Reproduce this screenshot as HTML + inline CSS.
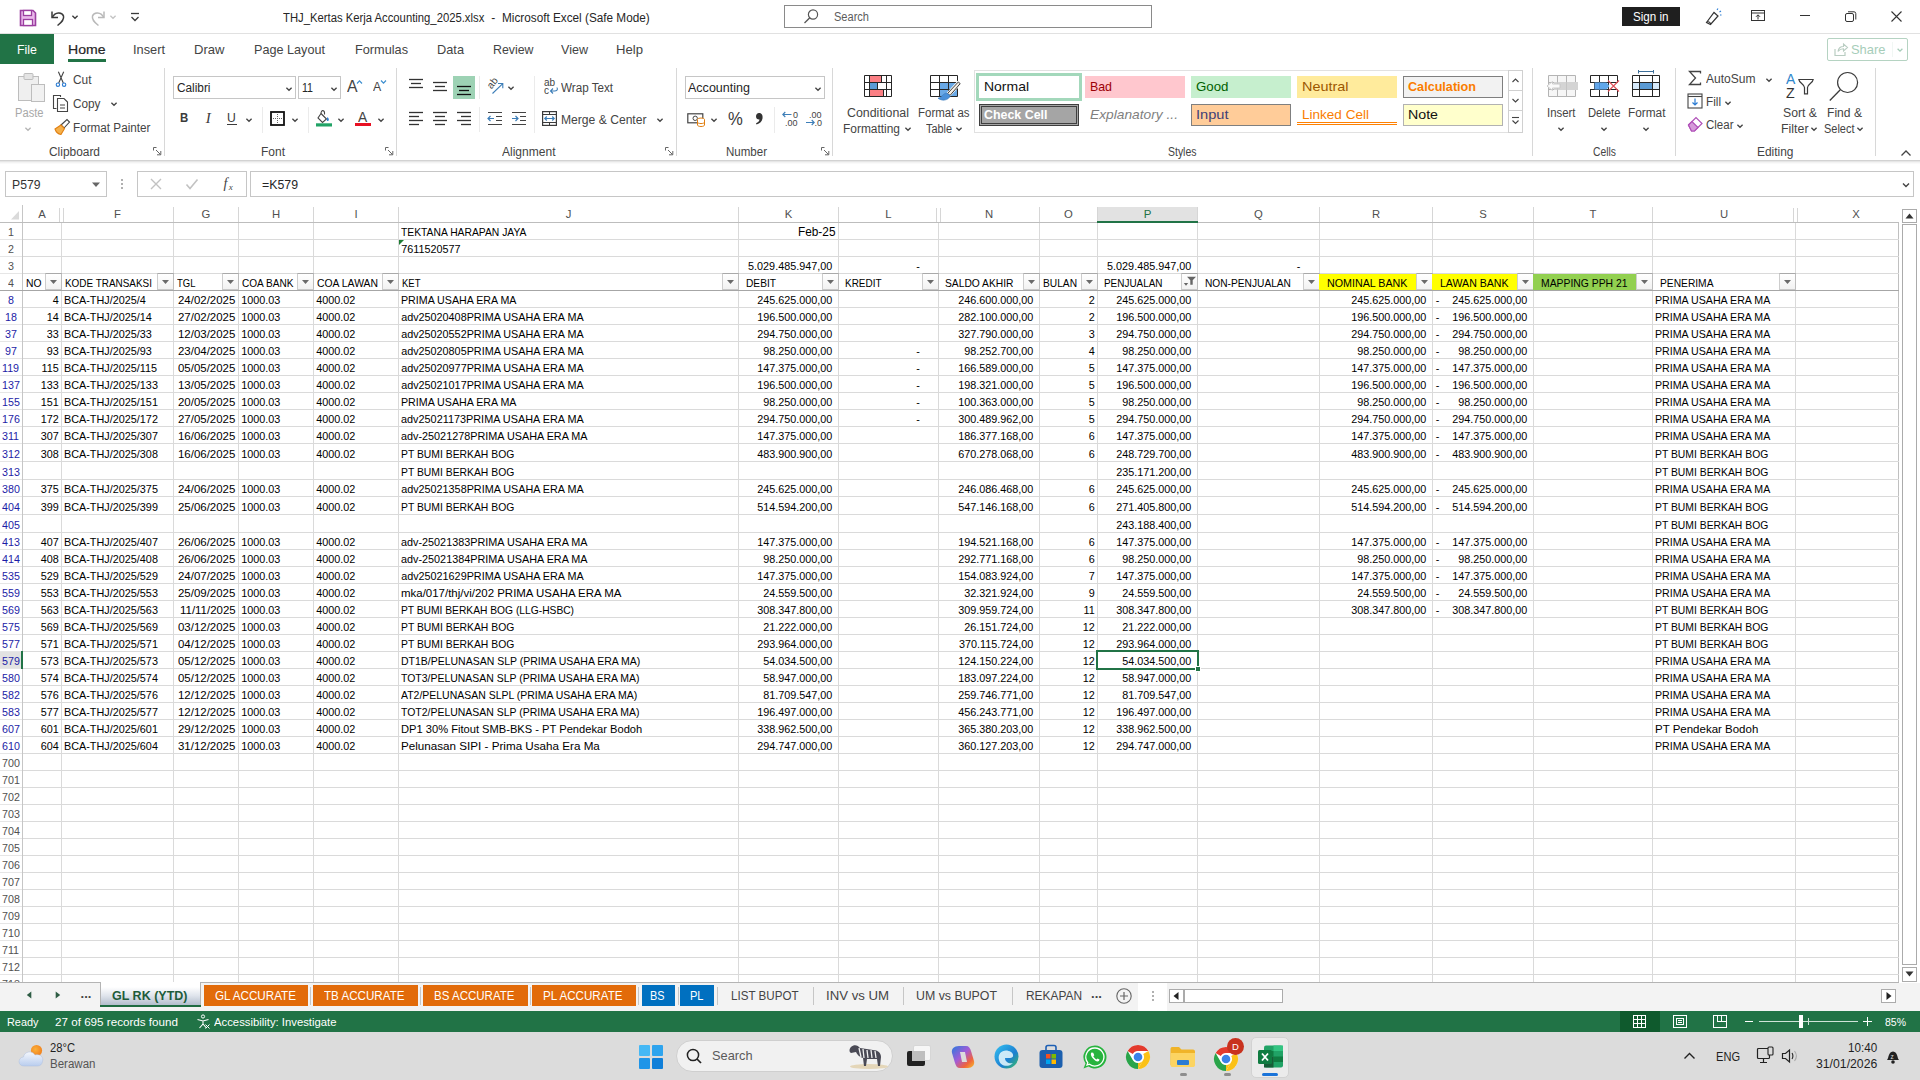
<!DOCTYPE html>
<html><head><meta charset="utf-8"><title>Excel</title>
<style>
html,body{margin:0;padding:0;background:#fff;}
body{width:1920px;height:1080px;position:relative;overflow:hidden;font-family:"Liberation Sans",sans-serif;}
.b{position:absolute;box-sizing:border-box;}
.t{position:absolute;white-space:pre;line-height:20px;height:20px;transform-origin:0 50%;}
</style></head><body>
<div class="b" style="left:22px;top:205px;width:1px;height:777px;background:#c6c6c6;"></div>
<div class="b" style="left:61px;top:223px;width:1px;height:759px;background:#dadada;"></div>
<div class="b" style="left:61px;top:207px;width:1px;height:16px;background:#d6d6d6;"></div>
<div class="b" style="left:173px;top:223px;width:1px;height:759px;background:#dadada;"></div>
<div class="b" style="left:173px;top:207px;width:1px;height:16px;background:#d6d6d6;"></div>
<div class="b" style="left:238px;top:223px;width:1px;height:759px;background:#dadada;"></div>
<div class="b" style="left:238px;top:207px;width:1px;height:16px;background:#d6d6d6;"></div>
<div class="b" style="left:313px;top:223px;width:1px;height:759px;background:#dadada;"></div>
<div class="b" style="left:313px;top:207px;width:1px;height:16px;background:#d6d6d6;"></div>
<div class="b" style="left:398px;top:223px;width:1px;height:759px;background:#dadada;"></div>
<div class="b" style="left:398px;top:207px;width:1px;height:16px;background:#d6d6d6;"></div>
<div class="b" style="left:738px;top:223px;width:1px;height:759px;background:#dadada;"></div>
<div class="b" style="left:738px;top:207px;width:1px;height:16px;background:#d6d6d6;"></div>
<div class="b" style="left:838px;top:223px;width:1px;height:759px;background:#dadada;"></div>
<div class="b" style="left:838px;top:207px;width:1px;height:16px;background:#d6d6d6;"></div>
<div class="b" style="left:938px;top:223px;width:1px;height:759px;background:#dadada;"></div>
<div class="b" style="left:938px;top:207px;width:1px;height:16px;background:#d6d6d6;"></div>
<div class="b" style="left:1039px;top:223px;width:1px;height:759px;background:#dadada;"></div>
<div class="b" style="left:1039px;top:207px;width:1px;height:16px;background:#d6d6d6;"></div>
<div class="b" style="left:1097px;top:223px;width:1px;height:759px;background:#dadada;"></div>
<div class="b" style="left:1097px;top:207px;width:1px;height:16px;background:#d6d6d6;"></div>
<div class="b" style="left:1197px;top:223px;width:1px;height:759px;background:#dadada;"></div>
<div class="b" style="left:1197px;top:207px;width:1px;height:16px;background:#d6d6d6;"></div>
<div class="b" style="left:1319px;top:223px;width:1px;height:759px;background:#dadada;"></div>
<div class="b" style="left:1319px;top:207px;width:1px;height:16px;background:#d6d6d6;"></div>
<div class="b" style="left:1432px;top:223px;width:1px;height:759px;background:#dadada;"></div>
<div class="b" style="left:1432px;top:207px;width:1px;height:16px;background:#d6d6d6;"></div>
<div class="b" style="left:1533px;top:223px;width:1px;height:759px;background:#dadada;"></div>
<div class="b" style="left:1533px;top:207px;width:1px;height:16px;background:#d6d6d6;"></div>
<div class="b" style="left:1652px;top:223px;width:1px;height:759px;background:#dadada;"></div>
<div class="b" style="left:1652px;top:207px;width:1px;height:16px;background:#d6d6d6;"></div>
<div class="b" style="left:1795px;top:223px;width:1px;height:759px;background:#dadada;"></div>
<div class="b" style="left:1795px;top:207px;width:1px;height:16px;background:#d6d6d6;"></div>
<div class="b" style="left:1898px;top:223px;width:1px;height:759px;background:#c0c0c0;"></div>
<div class="b" style="left:59px;top:208px;width:1px;height:15px;background:#d6d6d6;"></div>
<div class="b" style="left:61px;top:207px;width:1px;height:16px;background:#fff;"></div>
<div class="b" style="left:63px;top:208px;width:1px;height:15px;background:#d6d6d6;"></div>
<div class="b" style="left:936px;top:208px;width:1px;height:15px;background:#d6d6d6;"></div>
<div class="b" style="left:938px;top:207px;width:1px;height:16px;background:#fff;"></div>
<div class="b" style="left:940px;top:208px;width:1px;height:15px;background:#d6d6d6;"></div>
<div class="b" style="left:1793px;top:208px;width:1px;height:15px;background:#d6d6d6;"></div>
<div class="b" style="left:1795px;top:207px;width:1px;height:16px;background:#fff;"></div>
<div class="b" style="left:1797px;top:208px;width:1px;height:15px;background:#d6d6d6;"></div>
<div class="b" style="left:0px;top:222px;width:1899px;height:1px;background:#bdbdbd;"></div>
<div class="b" style="left:23px;top:239px;width:1876px;height:1px;background:#dadada;"></div>
<div class="b" style="left:0px;top:239px;width:22px;height:1px;background:#e6e6e6;"></div>
<div class="b" style="left:23px;top:256px;width:1876px;height:1px;background:#dadada;"></div>
<div class="b" style="left:0px;top:256px;width:22px;height:1px;background:#e6e6e6;"></div>
<div class="b" style="left:23px;top:273px;width:1876px;height:1px;background:#dadada;"></div>
<div class="b" style="left:0px;top:273px;width:22px;height:1px;background:#e6e6e6;"></div>
<div class="b" style="left:0px;top:290px;width:1899px;height:1px;background:#a6a6a6;"></div>
<div class="b" style="left:23px;top:307px;width:1876px;height:1px;background:#dadada;"></div>
<div class="b" style="left:0px;top:307px;width:22px;height:1px;background:#e6e6e6;"></div>
<div class="b" style="left:23px;top:324px;width:1876px;height:1px;background:#dadada;"></div>
<div class="b" style="left:0px;top:324px;width:22px;height:1px;background:#e6e6e6;"></div>
<div class="b" style="left:23px;top:341px;width:1876px;height:1px;background:#dadada;"></div>
<div class="b" style="left:0px;top:341px;width:22px;height:1px;background:#e6e6e6;"></div>
<div class="b" style="left:23px;top:358px;width:1876px;height:1px;background:#dadada;"></div>
<div class="b" style="left:0px;top:358px;width:22px;height:1px;background:#e6e6e6;"></div>
<div class="b" style="left:23px;top:375px;width:1876px;height:1px;background:#dadada;"></div>
<div class="b" style="left:0px;top:375px;width:22px;height:1px;background:#e6e6e6;"></div>
<div class="b" style="left:23px;top:392px;width:1876px;height:1px;background:#dadada;"></div>
<div class="b" style="left:0px;top:392px;width:22px;height:1px;background:#e6e6e6;"></div>
<div class="b" style="left:23px;top:409px;width:1876px;height:1px;background:#dadada;"></div>
<div class="b" style="left:0px;top:409px;width:22px;height:1px;background:#e6e6e6;"></div>
<div class="b" style="left:23px;top:426px;width:1876px;height:1px;background:#dadada;"></div>
<div class="b" style="left:0px;top:426px;width:22px;height:1px;background:#e6e6e6;"></div>
<div class="b" style="left:23px;top:443px;width:1876px;height:1px;background:#dadada;"></div>
<div class="b" style="left:0px;top:443px;width:22px;height:1px;background:#e6e6e6;"></div>
<div class="b" style="left:23px;top:461px;width:1876px;height:1px;background:#dadada;"></div>
<div class="b" style="left:0px;top:461px;width:22px;height:1px;background:#e6e6e6;"></div>
<div class="b" style="left:23px;top:479px;width:1876px;height:1px;background:#dadada;"></div>
<div class="b" style="left:0px;top:479px;width:22px;height:1px;background:#e6e6e6;"></div>
<div class="b" style="left:23px;top:496px;width:1876px;height:1px;background:#dadada;"></div>
<div class="b" style="left:0px;top:496px;width:22px;height:1px;background:#e6e6e6;"></div>
<div class="b" style="left:23px;top:514px;width:1876px;height:1px;background:#dadada;"></div>
<div class="b" style="left:0px;top:514px;width:22px;height:1px;background:#e6e6e6;"></div>
<div class="b" style="left:23px;top:532px;width:1876px;height:1px;background:#dadada;"></div>
<div class="b" style="left:0px;top:532px;width:22px;height:1px;background:#e6e6e6;"></div>
<div class="b" style="left:23px;top:549px;width:1876px;height:1px;background:#dadada;"></div>
<div class="b" style="left:0px;top:549px;width:22px;height:1px;background:#e6e6e6;"></div>
<div class="b" style="left:23px;top:566px;width:1876px;height:1px;background:#dadada;"></div>
<div class="b" style="left:0px;top:566px;width:22px;height:1px;background:#e6e6e6;"></div>
<div class="b" style="left:23px;top:583px;width:1876px;height:1px;background:#dadada;"></div>
<div class="b" style="left:0px;top:583px;width:22px;height:1px;background:#e6e6e6;"></div>
<div class="b" style="left:23px;top:600px;width:1876px;height:1px;background:#dadada;"></div>
<div class="b" style="left:0px;top:600px;width:22px;height:1px;background:#e6e6e6;"></div>
<div class="b" style="left:23px;top:617px;width:1876px;height:1px;background:#dadada;"></div>
<div class="b" style="left:0px;top:617px;width:22px;height:1px;background:#e6e6e6;"></div>
<div class="b" style="left:23px;top:634px;width:1876px;height:1px;background:#dadada;"></div>
<div class="b" style="left:0px;top:634px;width:22px;height:1px;background:#e6e6e6;"></div>
<div class="b" style="left:23px;top:651px;width:1876px;height:1px;background:#dadada;"></div>
<div class="b" style="left:0px;top:651px;width:22px;height:1px;background:#e6e6e6;"></div>
<div class="b" style="left:23px;top:668px;width:1876px;height:1px;background:#dadada;"></div>
<div class="b" style="left:0px;top:668px;width:22px;height:1px;background:#e6e6e6;"></div>
<div class="b" style="left:23px;top:685px;width:1876px;height:1px;background:#dadada;"></div>
<div class="b" style="left:0px;top:685px;width:22px;height:1px;background:#e6e6e6;"></div>
<div class="b" style="left:23px;top:702px;width:1876px;height:1px;background:#dadada;"></div>
<div class="b" style="left:0px;top:702px;width:22px;height:1px;background:#e6e6e6;"></div>
<div class="b" style="left:23px;top:719px;width:1876px;height:1px;background:#dadada;"></div>
<div class="b" style="left:0px;top:719px;width:22px;height:1px;background:#e6e6e6;"></div>
<div class="b" style="left:23px;top:736px;width:1876px;height:1px;background:#dadada;"></div>
<div class="b" style="left:0px;top:736px;width:22px;height:1px;background:#e6e6e6;"></div>
<div class="b" style="left:23px;top:753px;width:1876px;height:1px;background:#dadada;"></div>
<div class="b" style="left:0px;top:753px;width:22px;height:1px;background:#e6e6e6;"></div>
<div class="b" style="left:23px;top:770px;width:1876px;height:1px;background:#dadada;"></div>
<div class="b" style="left:0px;top:770px;width:22px;height:1px;background:#e6e6e6;"></div>
<div class="b" style="left:23px;top:787px;width:1876px;height:1px;background:#dadada;"></div>
<div class="b" style="left:0px;top:787px;width:22px;height:1px;background:#e6e6e6;"></div>
<div class="b" style="left:23px;top:804px;width:1876px;height:1px;background:#dadada;"></div>
<div class="b" style="left:0px;top:804px;width:22px;height:1px;background:#e6e6e6;"></div>
<div class="b" style="left:23px;top:821px;width:1876px;height:1px;background:#dadada;"></div>
<div class="b" style="left:0px;top:821px;width:22px;height:1px;background:#e6e6e6;"></div>
<div class="b" style="left:23px;top:838px;width:1876px;height:1px;background:#dadada;"></div>
<div class="b" style="left:0px;top:838px;width:22px;height:1px;background:#e6e6e6;"></div>
<div class="b" style="left:23px;top:855px;width:1876px;height:1px;background:#dadada;"></div>
<div class="b" style="left:0px;top:855px;width:22px;height:1px;background:#e6e6e6;"></div>
<div class="b" style="left:23px;top:872px;width:1876px;height:1px;background:#dadada;"></div>
<div class="b" style="left:0px;top:872px;width:22px;height:1px;background:#e6e6e6;"></div>
<div class="b" style="left:23px;top:889px;width:1876px;height:1px;background:#dadada;"></div>
<div class="b" style="left:0px;top:889px;width:22px;height:1px;background:#e6e6e6;"></div>
<div class="b" style="left:23px;top:906px;width:1876px;height:1px;background:#dadada;"></div>
<div class="b" style="left:0px;top:906px;width:22px;height:1px;background:#e6e6e6;"></div>
<div class="b" style="left:23px;top:923px;width:1876px;height:1px;background:#dadada;"></div>
<div class="b" style="left:0px;top:923px;width:22px;height:1px;background:#e6e6e6;"></div>
<div class="b" style="left:23px;top:940px;width:1876px;height:1px;background:#dadada;"></div>
<div class="b" style="left:0px;top:940px;width:22px;height:1px;background:#e6e6e6;"></div>
<div class="b" style="left:23px;top:957px;width:1876px;height:1px;background:#dadada;"></div>
<div class="b" style="left:0px;top:957px;width:22px;height:1px;background:#e6e6e6;"></div>
<div class="b" style="left:23px;top:974px;width:1876px;height:1px;background:#dadada;"></div>
<div class="b" style="left:0px;top:974px;width:22px;height:1px;background:#e6e6e6;"></div>
<svg class="b" style="left:4px;top:207px;" width="16" height="14" viewBox="0 0 16 14"><path d="M15 4 L15 12.5 L7 12.5 Z" fill="#dadada"/></svg>
<div class="b" style="left:1098px;top:207px;width:99px;height:14px;background:#e2e2e2;"></div>
<div class="b" style="left:1097px;top:221px;width:101px;height:2px;background:#217346;"></div>
<span class="t" style="left:38.23px;top:204.00px;font-size:11.3px;color:#505050;">A</span>
<span class="t" style="left:114.05px;top:204.00px;font-size:11.3px;color:#505050;">F</span>
<span class="t" style="left:201.61px;top:204.00px;font-size:11.3px;color:#505050;">G</span>
<span class="t" style="left:271.92px;top:204.00px;font-size:11.3px;color:#505050;">H</span>
<span class="t" style="left:354.43px;top:204.00px;font-size:11.3px;color:#505050;">I</span>
<span class="t" style="left:565.67px;top:204.00px;font-size:11.3px;color:#505050;">J</span>
<span class="t" style="left:784.73px;top:204.00px;font-size:11.3px;color:#505050;">K</span>
<span class="t" style="left:885.36px;top:204.00px;font-size:11.3px;color:#505050;">L</span>
<span class="t" style="left:984.92px;top:204.00px;font-size:11.3px;color:#505050;">N</span>
<span class="t" style="left:1064.11px;top:204.00px;font-size:11.3px;color:#505050;">O</span>
<span class="t" style="left:1143.66px;top:204.00px;font-size:11.5px;color:#217346;">P</span>
<span class="t" style="left:1254.11px;top:204.00px;font-size:11.3px;color:#505050;">Q</span>
<span class="t" style="left:1371.92px;top:204.00px;font-size:11.3px;color:#505050;">R</span>
<span class="t" style="left:1479.23px;top:204.00px;font-size:11.3px;color:#505050;">S</span>
<span class="t" style="left:1589.55px;top:204.00px;font-size:11.3px;color:#505050;">T</span>
<span class="t" style="left:1719.92px;top:204.00px;font-size:11.3px;color:#505050;">U</span>
<span class="t" style="left:1852.23px;top:204.00px;font-size:11.3px;color:#505050;">X</span>
<span class="t" style="left:7.93px;top:221.90px;font-size:11.5px;color:#505050;transform:scaleX(0.9300);">1</span>
<span class="t" style="left:7.93px;top:238.90px;font-size:11.5px;color:#505050;transform:scaleX(0.9300);">2</span>
<span class="t" style="left:7.93px;top:255.90px;font-size:11.5px;color:#505050;transform:scaleX(0.9300);">3</span>
<span class="t" style="left:7.93px;top:272.90px;font-size:11.5px;color:#505050;transform:scaleX(0.9300);">4</span>
<span class="t" style="left:7.93px;top:289.90px;font-size:11.5px;color:#1c1ca6;transform:scaleX(0.9300);">8</span>
<span class="t" style="left:4.95px;top:306.90px;font-size:11.5px;color:#1c1ca6;transform:scaleX(0.9300);">18</span>
<span class="t" style="left:4.95px;top:323.90px;font-size:11.5px;color:#1c1ca6;transform:scaleX(0.9300);">37</span>
<span class="t" style="left:4.95px;top:340.90px;font-size:11.5px;color:#1c1ca6;transform:scaleX(0.9300);">97</span>
<span class="t" style="left:2.37px;top:357.90px;font-size:11.5px;color:#1c1ca6;transform:scaleX(0.9300);">119</span>
<span class="t" style="left:1.98px;top:374.90px;font-size:11.5px;color:#1c1ca6;transform:scaleX(0.9300);">137</span>
<span class="t" style="left:1.98px;top:391.90px;font-size:11.5px;color:#1c1ca6;transform:scaleX(0.9300);">155</span>
<span class="t" style="left:1.98px;top:408.90px;font-size:11.5px;color:#1c1ca6;transform:scaleX(0.9300);">176</span>
<span class="t" style="left:2.37px;top:425.90px;font-size:11.5px;color:#1c1ca6;transform:scaleX(0.9300);">311</span>
<span class="t" style="left:1.98px;top:443.90px;font-size:11.5px;color:#1c1ca6;transform:scaleX(0.9300);">312</span>
<span class="t" style="left:1.98px;top:461.90px;font-size:11.5px;color:#1c1ca6;transform:scaleX(0.9300);">313</span>
<span class="t" style="left:1.98px;top:478.90px;font-size:11.5px;color:#1c1ca6;transform:scaleX(0.9300);">380</span>
<span class="t" style="left:1.98px;top:496.90px;font-size:11.5px;color:#1c1ca6;transform:scaleX(0.9300);">404</span>
<span class="t" style="left:1.98px;top:514.90px;font-size:11.5px;color:#1c1ca6;transform:scaleX(0.9300);">405</span>
<span class="t" style="left:1.98px;top:531.90px;font-size:11.5px;color:#1c1ca6;transform:scaleX(0.9300);">413</span>
<span class="t" style="left:1.98px;top:548.90px;font-size:11.5px;color:#1c1ca6;transform:scaleX(0.9300);">414</span>
<span class="t" style="left:1.98px;top:565.90px;font-size:11.5px;color:#1c1ca6;transform:scaleX(0.9300);">535</span>
<span class="t" style="left:1.98px;top:582.90px;font-size:11.5px;color:#1c1ca6;transform:scaleX(0.9300);">559</span>
<span class="t" style="left:1.98px;top:599.90px;font-size:11.5px;color:#1c1ca6;transform:scaleX(0.9300);">569</span>
<span class="t" style="left:1.98px;top:616.90px;font-size:11.5px;color:#1c1ca6;transform:scaleX(0.9300);">575</span>
<span class="t" style="left:1.98px;top:633.90px;font-size:11.5px;color:#1c1ca6;transform:scaleX(0.9300);">577</span>
<div class="b" style="left:0px;top:652px;width:21px;height:16px;background:#e2e2e2;"></div>
<div class="b" style="left:21px;top:651px;width:2px;height:18px;background:#217346;"></div>
<span class="t" style="left:1.98px;top:650.90px;font-size:11.5px;color:#1c1ca6;transform:scaleX(0.9300);">579</span>
<span class="t" style="left:1.98px;top:667.90px;font-size:11.5px;color:#1c1ca6;transform:scaleX(0.9300);">580</span>
<span class="t" style="left:1.98px;top:684.90px;font-size:11.5px;color:#1c1ca6;transform:scaleX(0.9300);">582</span>
<span class="t" style="left:1.98px;top:701.90px;font-size:11.5px;color:#1c1ca6;transform:scaleX(0.9300);">583</span>
<span class="t" style="left:1.98px;top:718.90px;font-size:11.5px;color:#1c1ca6;transform:scaleX(0.9300);">607</span>
<span class="t" style="left:1.98px;top:735.90px;font-size:11.5px;color:#1c1ca6;transform:scaleX(0.9300);">610</span>
<span class="t" style="left:1.98px;top:752.90px;font-size:11.5px;color:#505050;transform:scaleX(0.9300);">700</span>
<span class="t" style="left:1.98px;top:769.90px;font-size:11.5px;color:#505050;transform:scaleX(0.9300);">701</span>
<span class="t" style="left:1.98px;top:786.90px;font-size:11.5px;color:#505050;transform:scaleX(0.9300);">702</span>
<span class="t" style="left:1.98px;top:803.90px;font-size:11.5px;color:#505050;transform:scaleX(0.9300);">703</span>
<span class="t" style="left:1.98px;top:820.90px;font-size:11.5px;color:#505050;transform:scaleX(0.9300);">704</span>
<span class="t" style="left:1.98px;top:837.90px;font-size:11.5px;color:#505050;transform:scaleX(0.9300);">705</span>
<span class="t" style="left:1.98px;top:854.90px;font-size:11.5px;color:#505050;transform:scaleX(0.9300);">706</span>
<span class="t" style="left:1.98px;top:871.90px;font-size:11.5px;color:#505050;transform:scaleX(0.9300);">707</span>
<span class="t" style="left:1.98px;top:888.90px;font-size:11.5px;color:#505050;transform:scaleX(0.9300);">708</span>
<span class="t" style="left:1.98px;top:905.90px;font-size:11.5px;color:#505050;transform:scaleX(0.9300);">709</span>
<span class="t" style="left:1.98px;top:922.90px;font-size:11.5px;color:#505050;transform:scaleX(0.9300);">710</span>
<span class="t" style="left:2.37px;top:939.90px;font-size:11.5px;color:#505050;transform:scaleX(0.9300);">711</span>
<span class="t" style="left:1.98px;top:956.90px;font-size:11.5px;color:#505050;transform:scaleX(0.9300);">712</span>
<div class="b" style="left:0;top:975px;width:22px;height:7px;overflow:hidden"><span class="t" style="left:2.2px;top:-1.5px;font-size:11.5px;color:#505050;transform:scaleX(.93)">713</span></div>
<span class="t" style="left:401.20px;top:221.60px;font-size:10.8px;color:#000;transform:scaleX(0.9563);">TEKTANA HARAPAN JAYA</span>
<span class="t" style="left:401.20px;top:238.60px;font-size:10.8px;color:#000;">7611520577</span>
<svg class="b" style="left:399px;top:240px;" width="6" height="6" viewBox="0 0 6 6"><path d="M0 0 H5 L0 5 Z" fill="#1e7b34"/></svg>
<span class="t" style="left:798.00px;top:221.60px;font-size:12.2px;color:#000;transform:scaleX(0.9700);">Feb-25</span>
<span class="t" style="left:748.12px;top:255.60px;font-size:10.8px;color:#000;">5.029.485.947,00</span>
<span class="t" style="left:1107.12px;top:255.60px;font-size:10.8px;color:#000;">5.029.485.947,00</span>
<span class="t" style="left:916.20px;top:255.60px;font-size:10.8px;color:#000;">-</span>
<span class="t" style="left:1296.70px;top:255.60px;font-size:10.8px;color:#000;">-</span>
<div class="b" style="left:1319px;top:274px;width:113px;height:16px;background:#ffff00;"></div>
<div class="b" style="left:1432px;top:274px;width:101px;height:16px;background:#ffff00;"></div>
<div class="b" style="left:1533px;top:274px;width:119px;height:16px;background:#92d050;"></div>
<span class="t" style="left:25.80px;top:272.60px;font-size:10.8px;color:#000;transform:scaleX(0.9568);">NO</span>
<span class="t" style="left:64.50px;top:272.60px;font-size:10.8px;color:#000;transform:scaleX(0.9194);">KODE TRANSAKSI</span>
<span class="t" style="left:176.50px;top:272.60px;font-size:10.8px;color:#000;transform:scaleX(0.8808);">TGL</span>
<span class="t" style="left:241.50px;top:272.60px;font-size:10.8px;color:#000;transform:scaleX(0.9326);">COA BANK</span>
<span class="t" style="left:316.50px;top:272.60px;font-size:10.8px;color:#000;transform:scaleX(0.9619);">COA LAWAN</span>
<span class="t" style="left:401.50px;top:272.60px;font-size:10.8px;color:#000;transform:scaleX(0.8807);">KET</span>
<span class="t" style="left:745.50px;top:272.60px;font-size:10.8px;color:#000;transform:scaleX(0.9432);">DEBIT</span>
<span class="t" style="left:845.00px;top:272.60px;font-size:10.8px;color:#000;transform:scaleX(0.9216);">KREDIT</span>
<span class="t" style="left:945.00px;top:272.60px;font-size:10.8px;color:#000;transform:scaleX(0.9510);">SALDO AKHIR</span>
<span class="t" style="left:1042.50px;top:272.60px;font-size:10.8px;color:#000;transform:scaleX(0.9441);">BULAN</span>
<span class="t" style="left:1104.00px;top:272.60px;font-size:10.8px;color:#000;transform:scaleX(0.9195);">PENJUALAN</span>
<span class="t" style="left:1204.50px;top:272.60px;font-size:10.8px;color:#000;transform:scaleX(0.9428);">NON-PENJUALAN</span>
<span class="t" style="left:1326.50px;top:272.60px;font-size:10.8px;color:#000;transform:scaleX(0.9912);">NOMINAL BANK</span>
<span class="t" style="left:1439.50px;top:272.60px;font-size:10.8px;color:#000;transform:scaleX(0.9783);">LAWAN BANK</span>
<span class="t" style="left:1540.50px;top:272.60px;font-size:10.8px;color:#000;transform:scaleX(0.9608);">MAPPING PPH 21</span>
<span class="t" style="left:1659.50px;top:272.60px;font-size:10.8px;color:#000;transform:scaleX(0.9484);">PENERIMA</span>
<div class="b" style="left:45px;top:273px;width:17px;height:17px;background:linear-gradient(#ffffff,#f2f2f2);border-left:1px solid #cdcdcd;border-top:1px solid #a9a9a9;border-right:1px solid #bdbdbd;border-bottom:1px solid #c9c9c9;"></div>
<svg class="b" style="left:45px;top:273px;" width="17" height="17" viewBox="0 0 17 17"><path d="M5 7 H12 L8.5 11 Z" fill="#6a6a6a"/></svg>
<div class="b" style="left:157px;top:273px;width:17px;height:17px;background:linear-gradient(#ffffff,#f2f2f2);border-left:1px solid #cdcdcd;border-top:1px solid #a9a9a9;border-right:1px solid #bdbdbd;border-bottom:1px solid #c9c9c9;"></div>
<svg class="b" style="left:157px;top:273px;" width="17" height="17" viewBox="0 0 17 17"><path d="M5 7 H12 L8.5 11 Z" fill="#6a6a6a"/></svg>
<div class="b" style="left:222px;top:273px;width:17px;height:17px;background:linear-gradient(#ffffff,#f2f2f2);border-left:1px solid #cdcdcd;border-top:1px solid #a9a9a9;border-right:1px solid #bdbdbd;border-bottom:1px solid #c9c9c9;"></div>
<svg class="b" style="left:222px;top:273px;" width="17" height="17" viewBox="0 0 17 17"><path d="M5 7 H12 L8.5 11 Z" fill="#6a6a6a"/></svg>
<div class="b" style="left:297px;top:273px;width:17px;height:17px;background:linear-gradient(#ffffff,#f2f2f2);border-left:1px solid #cdcdcd;border-top:1px solid #a9a9a9;border-right:1px solid #bdbdbd;border-bottom:1px solid #c9c9c9;"></div>
<svg class="b" style="left:297px;top:273px;" width="17" height="17" viewBox="0 0 17 17"><path d="M5 7 H12 L8.5 11 Z" fill="#6a6a6a"/></svg>
<div class="b" style="left:382px;top:273px;width:17px;height:17px;background:linear-gradient(#ffffff,#f2f2f2);border-left:1px solid #cdcdcd;border-top:1px solid #a9a9a9;border-right:1px solid #bdbdbd;border-bottom:1px solid #c9c9c9;"></div>
<svg class="b" style="left:382px;top:273px;" width="17" height="17" viewBox="0 0 17 17"><path d="M5 7 H12 L8.5 11 Z" fill="#6a6a6a"/></svg>
<div class="b" style="left:722px;top:273px;width:17px;height:17px;background:linear-gradient(#ffffff,#f2f2f2);border-left:1px solid #cdcdcd;border-top:1px solid #a9a9a9;border-right:1px solid #bdbdbd;border-bottom:1px solid #c9c9c9;"></div>
<svg class="b" style="left:722px;top:273px;" width="17" height="17" viewBox="0 0 17 17"><path d="M5 7 H12 L8.5 11 Z" fill="#6a6a6a"/></svg>
<div class="b" style="left:822px;top:273px;width:17px;height:17px;background:linear-gradient(#ffffff,#f2f2f2);border-left:1px solid #cdcdcd;border-top:1px solid #a9a9a9;border-right:1px solid #bdbdbd;border-bottom:1px solid #c9c9c9;"></div>
<svg class="b" style="left:822px;top:273px;" width="17" height="17" viewBox="0 0 17 17"><path d="M5 7 H12 L8.5 11 Z" fill="#6a6a6a"/></svg>
<div class="b" style="left:922px;top:273px;width:17px;height:17px;background:linear-gradient(#ffffff,#f2f2f2);border-left:1px solid #cdcdcd;border-top:1px solid #a9a9a9;border-right:1px solid #bdbdbd;border-bottom:1px solid #c9c9c9;"></div>
<svg class="b" style="left:922px;top:273px;" width="17" height="17" viewBox="0 0 17 17"><path d="M5 7 H12 L8.5 11 Z" fill="#6a6a6a"/></svg>
<div class="b" style="left:1023px;top:273px;width:17px;height:17px;background:linear-gradient(#ffffff,#f2f2f2);border-left:1px solid #cdcdcd;border-top:1px solid #a9a9a9;border-right:1px solid #bdbdbd;border-bottom:1px solid #c9c9c9;"></div>
<svg class="b" style="left:1023px;top:273px;" width="17" height="17" viewBox="0 0 17 17"><path d="M5 7 H12 L8.5 11 Z" fill="#6a6a6a"/></svg>
<div class="b" style="left:1081px;top:273px;width:17px;height:17px;background:linear-gradient(#ffffff,#f2f2f2);border-left:1px solid #cdcdcd;border-top:1px solid #a9a9a9;border-right:1px solid #bdbdbd;border-bottom:1px solid #c9c9c9;"></div>
<svg class="b" style="left:1081px;top:273px;" width="17" height="17" viewBox="0 0 17 17"><path d="M5 7 H12 L8.5 11 Z" fill="#6a6a6a"/></svg>
<div class="b" style="left:1303px;top:273px;width:17px;height:17px;background:linear-gradient(#ffffff,#f2f2f2);border-left:1px solid #cdcdcd;border-top:1px solid #a9a9a9;border-right:1px solid #bdbdbd;border-bottom:1px solid #c9c9c9;"></div>
<svg class="b" style="left:1303px;top:273px;" width="17" height="17" viewBox="0 0 17 17"><path d="M5 7 H12 L8.5 11 Z" fill="#6a6a6a"/></svg>
<div class="b" style="left:1416px;top:273px;width:17px;height:17px;background:linear-gradient(#ffffff,#f2f2f2);border-left:1px solid #cdcdcd;border-top:1px solid #a9a9a9;border-right:1px solid #bdbdbd;border-bottom:1px solid #c9c9c9;"></div>
<svg class="b" style="left:1416px;top:273px;" width="17" height="17" viewBox="0 0 17 17"><path d="M5 7 H12 L8.5 11 Z" fill="#6a6a6a"/></svg>
<div class="b" style="left:1517px;top:273px;width:17px;height:17px;background:linear-gradient(#ffffff,#f2f2f2);border-left:1px solid #cdcdcd;border-top:1px solid #a9a9a9;border-right:1px solid #bdbdbd;border-bottom:1px solid #c9c9c9;"></div>
<svg class="b" style="left:1517px;top:273px;" width="17" height="17" viewBox="0 0 17 17"><path d="M5 7 H12 L8.5 11 Z" fill="#6a6a6a"/></svg>
<div class="b" style="left:1636px;top:273px;width:17px;height:17px;background:linear-gradient(#ffffff,#f2f2f2);border-left:1px solid #cdcdcd;border-top:1px solid #a9a9a9;border-right:1px solid #bdbdbd;border-bottom:1px solid #c9c9c9;"></div>
<svg class="b" style="left:1636px;top:273px;" width="17" height="17" viewBox="0 0 17 17"><path d="M5 7 H12 L8.5 11 Z" fill="#6a6a6a"/></svg>
<div class="b" style="left:1779px;top:273px;width:17px;height:17px;background:linear-gradient(#ffffff,#f2f2f2);border-left:1px solid #cdcdcd;border-top:1px solid #a9a9a9;border-right:1px solid #bdbdbd;border-bottom:1px solid #c9c9c9;"></div>
<svg class="b" style="left:1779px;top:273px;" width="17" height="17" viewBox="0 0 17 17"><path d="M5 7 H12 L8.5 11 Z" fill="#6a6a6a"/></svg>
<div class="b" style="left:1181px;top:273px;width:17px;height:17px;background:linear-gradient(#ffffff,#f2f2f2);border-left:1px solid #cdcdcd;border-top:1px solid #a9a9a9;border-right:1px solid #bdbdbd;border-bottom:1px solid #c9c9c9;"></div>
<svg class="b" style="left:1181px;top:273px;" width="17" height="17" viewBox="0 0 17 17"><path d="M6 3.8 H15 L11.7 7.3 V11.8 H9.3 V7.3 Z" fill="#666"/><path d="M2.8 10 H7.2 L5 12.8 Z" fill="#666"/></svg>
<div class="b" style="left:1319px;top:274px;width:1px;height:16px;background:#ffff00;"></div>
<div class="b" style="left:1432px;top:274px;width:1px;height:16px;background:#ffff00;"></div>
<div class="b" style="left:1533px;top:274px;width:1px;height:16px;background:#92d050;"></div>
<span class="t" style="left:52.79px;top:289.60px;font-size:10.8px;color:#000;">4</span>
<span class="t" style="left:64.20px;top:289.60px;font-size:10.8px;color:#000;transform:scaleX(1.0030);">BCA-THJ/2025/4</span>
<span class="t" style="left:178.25px;top:289.60px;font-size:10.8px;color:#000;transform:scaleX(1.0610);">24/02/2025</span>
<span class="t" style="left:241.20px;top:289.60px;font-size:10.8px;color:#000;">1000.03</span>
<span class="t" style="left:316.20px;top:289.60px;font-size:10.8px;color:#000;">4000.02</span>
<span class="t" style="left:401.20px;top:289.60px;font-size:10.8px;color:#000;transform:scaleX(0.9869);">PRIMA USAHA ERA MA</span>
<span class="t" style="left:757.13px;top:289.60px;font-size:10.8px;color:#000;">245.625.000,00</span>
<span class="t" style="left:958.13px;top:289.60px;font-size:10.8px;color:#000;">246.600.000,00</span>
<span class="t" style="left:1088.79px;top:289.60px;font-size:10.8px;color:#000;">2</span>
<span class="t" style="left:1116.13px;top:289.60px;font-size:10.8px;color:#000;">245.625.000,00</span>
<span class="t" style="left:1351.13px;top:289.60px;font-size:10.8px;color:#000;">245.625.000,00</span>
<span class="t" style="left:1452.13px;top:289.60px;font-size:10.8px;color:#000;">245.625.000,00</span>
<span class="t" style="left:1435.70px;top:289.60px;font-size:10.8px;color:#000;">-</span>
<span class="t" style="left:1655.20px;top:289.60px;font-size:10.8px;color:#000;transform:scaleX(0.9851);">PRIMA USAHA ERA MA</span>
<span class="t" style="left:46.79px;top:306.60px;font-size:10.8px;color:#000;">14</span>
<span class="t" style="left:64.20px;top:306.60px;font-size:10.8px;color:#000;transform:scaleX(1.0030);">BCA-THJ/2025/14</span>
<span class="t" style="left:178.25px;top:306.60px;font-size:10.8px;color:#000;transform:scaleX(1.0610);">27/02/2025</span>
<span class="t" style="left:241.20px;top:306.60px;font-size:10.8px;color:#000;">1000.03</span>
<span class="t" style="left:316.20px;top:306.60px;font-size:10.8px;color:#000;">4000.02</span>
<span class="t" style="left:401.20px;top:306.60px;font-size:10.8px;color:#000;">adv25020408PRIMA USAHA ERA MA</span>
<span class="t" style="left:757.13px;top:306.60px;font-size:10.8px;color:#000;">196.500.000,00</span>
<span class="t" style="left:958.13px;top:306.60px;font-size:10.8px;color:#000;">282.100.000,00</span>
<span class="t" style="left:1088.79px;top:306.60px;font-size:10.8px;color:#000;">2</span>
<span class="t" style="left:1116.13px;top:306.60px;font-size:10.8px;color:#000;">196.500.000,00</span>
<span class="t" style="left:1351.13px;top:306.60px;font-size:10.8px;color:#000;">196.500.000,00</span>
<span class="t" style="left:1452.13px;top:306.60px;font-size:10.8px;color:#000;">196.500.000,00</span>
<span class="t" style="left:1435.70px;top:306.60px;font-size:10.8px;color:#000;">-</span>
<span class="t" style="left:1655.20px;top:306.60px;font-size:10.8px;color:#000;transform:scaleX(0.9851);">PRIMA USAHA ERA MA</span>
<span class="t" style="left:46.79px;top:323.60px;font-size:10.8px;color:#000;">33</span>
<span class="t" style="left:64.20px;top:323.60px;font-size:10.8px;color:#000;transform:scaleX(1.0030);">BCA-THJ/2025/33</span>
<span class="t" style="left:178.25px;top:323.60px;font-size:10.8px;color:#000;transform:scaleX(1.0610);">12/03/2025</span>
<span class="t" style="left:241.20px;top:323.60px;font-size:10.8px;color:#000;">1000.03</span>
<span class="t" style="left:316.20px;top:323.60px;font-size:10.8px;color:#000;">4000.02</span>
<span class="t" style="left:401.20px;top:323.60px;font-size:10.8px;color:#000;">adv25020552PRIMA USAHA ERA MA</span>
<span class="t" style="left:757.13px;top:323.60px;font-size:10.8px;color:#000;">294.750.000,00</span>
<span class="t" style="left:958.13px;top:323.60px;font-size:10.8px;color:#000;">327.790.000,00</span>
<span class="t" style="left:1088.79px;top:323.60px;font-size:10.8px;color:#000;">3</span>
<span class="t" style="left:1116.13px;top:323.60px;font-size:10.8px;color:#000;">294.750.000,00</span>
<span class="t" style="left:1351.13px;top:323.60px;font-size:10.8px;color:#000;">294.750.000,00</span>
<span class="t" style="left:1452.13px;top:323.60px;font-size:10.8px;color:#000;">294.750.000,00</span>
<span class="t" style="left:1435.70px;top:323.60px;font-size:10.8px;color:#000;">-</span>
<span class="t" style="left:1655.20px;top:323.60px;font-size:10.8px;color:#000;transform:scaleX(0.9851);">PRIMA USAHA ERA MA</span>
<span class="t" style="left:46.79px;top:340.60px;font-size:10.8px;color:#000;">93</span>
<span class="t" style="left:64.20px;top:340.60px;font-size:10.8px;color:#000;transform:scaleX(1.0030);">BCA-THJ/2025/93</span>
<span class="t" style="left:178.25px;top:340.60px;font-size:10.8px;color:#000;transform:scaleX(1.0610);">23/04/2025</span>
<span class="t" style="left:241.20px;top:340.60px;font-size:10.8px;color:#000;">1000.03</span>
<span class="t" style="left:316.20px;top:340.60px;font-size:10.8px;color:#000;">4000.02</span>
<span class="t" style="left:401.20px;top:340.60px;font-size:10.8px;color:#000;">adv25020805PRIMA USAHA ERA MA</span>
<span class="t" style="left:763.13px;top:340.60px;font-size:10.8px;color:#000;">98.250.000,00</span>
<span class="t" style="left:916.20px;top:340.60px;font-size:10.8px;color:#000;">-</span>
<span class="t" style="left:964.13px;top:340.60px;font-size:10.8px;color:#000;">98.252.700,00</span>
<span class="t" style="left:1088.79px;top:340.60px;font-size:10.8px;color:#000;">4</span>
<span class="t" style="left:1122.13px;top:340.60px;font-size:10.8px;color:#000;">98.250.000,00</span>
<span class="t" style="left:1357.13px;top:340.60px;font-size:10.8px;color:#000;">98.250.000,00</span>
<span class="t" style="left:1458.13px;top:340.60px;font-size:10.8px;color:#000;">98.250.000,00</span>
<span class="t" style="left:1435.70px;top:340.60px;font-size:10.8px;color:#000;">-</span>
<span class="t" style="left:1655.20px;top:340.60px;font-size:10.8px;color:#000;transform:scaleX(0.9851);">PRIMA USAHA ERA MA</span>
<span class="t" style="left:41.58px;top:357.60px;font-size:10.8px;color:#000;">115</span>
<span class="t" style="left:64.20px;top:357.60px;font-size:10.8px;color:#000;transform:scaleX(1.0030);">BCA-THJ/2025/115</span>
<span class="t" style="left:178.25px;top:357.60px;font-size:10.8px;color:#000;transform:scaleX(1.0610);">05/05/2025</span>
<span class="t" style="left:241.20px;top:357.60px;font-size:10.8px;color:#000;">1000.03</span>
<span class="t" style="left:316.20px;top:357.60px;font-size:10.8px;color:#000;">4000.02</span>
<span class="t" style="left:401.20px;top:357.60px;font-size:10.8px;color:#000;">adv25020977PRIMA USAHA ERA MA</span>
<span class="t" style="left:757.13px;top:357.60px;font-size:10.8px;color:#000;">147.375.000,00</span>
<span class="t" style="left:916.20px;top:357.60px;font-size:10.8px;color:#000;">-</span>
<span class="t" style="left:958.13px;top:357.60px;font-size:10.8px;color:#000;">166.589.000,00</span>
<span class="t" style="left:1088.79px;top:357.60px;font-size:10.8px;color:#000;">5</span>
<span class="t" style="left:1116.13px;top:357.60px;font-size:10.8px;color:#000;">147.375.000,00</span>
<span class="t" style="left:1351.13px;top:357.60px;font-size:10.8px;color:#000;">147.375.000,00</span>
<span class="t" style="left:1452.13px;top:357.60px;font-size:10.8px;color:#000;">147.375.000,00</span>
<span class="t" style="left:1435.70px;top:357.60px;font-size:10.8px;color:#000;">-</span>
<span class="t" style="left:1655.20px;top:357.60px;font-size:10.8px;color:#000;transform:scaleX(0.9851);">PRIMA USAHA ERA MA</span>
<span class="t" style="left:40.78px;top:374.60px;font-size:10.8px;color:#000;">133</span>
<span class="t" style="left:64.20px;top:374.60px;font-size:10.8px;color:#000;transform:scaleX(1.0030);">BCA-THJ/2025/133</span>
<span class="t" style="left:178.25px;top:374.60px;font-size:10.8px;color:#000;transform:scaleX(1.0610);">13/05/2025</span>
<span class="t" style="left:241.20px;top:374.60px;font-size:10.8px;color:#000;">1000.03</span>
<span class="t" style="left:316.20px;top:374.60px;font-size:10.8px;color:#000;">4000.02</span>
<span class="t" style="left:401.20px;top:374.60px;font-size:10.8px;color:#000;">adv25021017PRIMA USAHA ERA MA</span>
<span class="t" style="left:757.13px;top:374.60px;font-size:10.8px;color:#000;">196.500.000,00</span>
<span class="t" style="left:916.20px;top:374.60px;font-size:10.8px;color:#000;">-</span>
<span class="t" style="left:958.13px;top:374.60px;font-size:10.8px;color:#000;">198.321.000,00</span>
<span class="t" style="left:1088.79px;top:374.60px;font-size:10.8px;color:#000;">5</span>
<span class="t" style="left:1116.13px;top:374.60px;font-size:10.8px;color:#000;">196.500.000,00</span>
<span class="t" style="left:1351.13px;top:374.60px;font-size:10.8px;color:#000;">196.500.000,00</span>
<span class="t" style="left:1452.13px;top:374.60px;font-size:10.8px;color:#000;">196.500.000,00</span>
<span class="t" style="left:1435.70px;top:374.60px;font-size:10.8px;color:#000;">-</span>
<span class="t" style="left:1655.20px;top:374.60px;font-size:10.8px;color:#000;transform:scaleX(0.9851);">PRIMA USAHA ERA MA</span>
<span class="t" style="left:40.78px;top:391.60px;font-size:10.8px;color:#000;">151</span>
<span class="t" style="left:64.20px;top:391.60px;font-size:10.8px;color:#000;transform:scaleX(1.0030);">BCA-THJ/2025/151</span>
<span class="t" style="left:178.25px;top:391.60px;font-size:10.8px;color:#000;transform:scaleX(1.0610);">20/05/2025</span>
<span class="t" style="left:241.20px;top:391.60px;font-size:10.8px;color:#000;">1000.03</span>
<span class="t" style="left:316.20px;top:391.60px;font-size:10.8px;color:#000;">4000.02</span>
<span class="t" style="left:401.20px;top:391.60px;font-size:10.8px;color:#000;transform:scaleX(0.9869);">PRIMA USAHA ERA MA</span>
<span class="t" style="left:763.13px;top:391.60px;font-size:10.8px;color:#000;">98.250.000,00</span>
<span class="t" style="left:916.20px;top:391.60px;font-size:10.8px;color:#000;">-</span>
<span class="t" style="left:958.13px;top:391.60px;font-size:10.8px;color:#000;">100.363.000,00</span>
<span class="t" style="left:1088.79px;top:391.60px;font-size:10.8px;color:#000;">5</span>
<span class="t" style="left:1122.13px;top:391.60px;font-size:10.8px;color:#000;">98.250.000,00</span>
<span class="t" style="left:1357.13px;top:391.60px;font-size:10.8px;color:#000;">98.250.000,00</span>
<span class="t" style="left:1458.13px;top:391.60px;font-size:10.8px;color:#000;">98.250.000,00</span>
<span class="t" style="left:1435.70px;top:391.60px;font-size:10.8px;color:#000;">-</span>
<span class="t" style="left:1655.20px;top:391.60px;font-size:10.8px;color:#000;transform:scaleX(0.9851);">PRIMA USAHA ERA MA</span>
<span class="t" style="left:40.78px;top:408.60px;font-size:10.8px;color:#000;">172</span>
<span class="t" style="left:64.20px;top:408.60px;font-size:10.8px;color:#000;transform:scaleX(1.0030);">BCA-THJ/2025/172</span>
<span class="t" style="left:178.25px;top:408.60px;font-size:10.8px;color:#000;transform:scaleX(1.0610);">27/05/2025</span>
<span class="t" style="left:241.20px;top:408.60px;font-size:10.8px;color:#000;">1000.03</span>
<span class="t" style="left:316.20px;top:408.60px;font-size:10.8px;color:#000;">4000.02</span>
<span class="t" style="left:401.20px;top:408.60px;font-size:10.8px;color:#000;transform:scaleX(1.0060);">adv25021173PRIMA USAHA ERA MA</span>
<span class="t" style="left:757.13px;top:408.60px;font-size:10.8px;color:#000;">294.750.000,00</span>
<span class="t" style="left:916.20px;top:408.60px;font-size:10.8px;color:#000;">-</span>
<span class="t" style="left:958.13px;top:408.60px;font-size:10.8px;color:#000;">300.489.962,00</span>
<span class="t" style="left:1088.79px;top:408.60px;font-size:10.8px;color:#000;">5</span>
<span class="t" style="left:1116.13px;top:408.60px;font-size:10.8px;color:#000;">294.750.000,00</span>
<span class="t" style="left:1351.13px;top:408.60px;font-size:10.8px;color:#000;">294.750.000,00</span>
<span class="t" style="left:1452.13px;top:408.60px;font-size:10.8px;color:#000;">294.750.000,00</span>
<span class="t" style="left:1435.70px;top:408.60px;font-size:10.8px;color:#000;">-</span>
<span class="t" style="left:1655.20px;top:408.60px;font-size:10.8px;color:#000;transform:scaleX(0.9851);">PRIMA USAHA ERA MA</span>
<span class="t" style="left:40.78px;top:425.60px;font-size:10.8px;color:#000;">307</span>
<span class="t" style="left:64.20px;top:425.60px;font-size:10.8px;color:#000;transform:scaleX(1.0030);">BCA-THJ/2025/307</span>
<span class="t" style="left:178.25px;top:425.60px;font-size:10.8px;color:#000;transform:scaleX(1.0610);">16/06/2025</span>
<span class="t" style="left:241.20px;top:425.60px;font-size:10.8px;color:#000;">1000.03</span>
<span class="t" style="left:316.20px;top:425.60px;font-size:10.8px;color:#000;">4000.02</span>
<span class="t" style="left:401.20px;top:425.60px;font-size:10.8px;color:#000;transform:scaleX(1.0027);">adv-25021278PRIMA USAHA ERA MA</span>
<span class="t" style="left:757.13px;top:425.60px;font-size:10.8px;color:#000;">147.375.000,00</span>
<span class="t" style="left:958.13px;top:425.60px;font-size:10.8px;color:#000;">186.377.168,00</span>
<span class="t" style="left:1088.79px;top:425.60px;font-size:10.8px;color:#000;">6</span>
<span class="t" style="left:1116.13px;top:425.60px;font-size:10.8px;color:#000;">147.375.000,00</span>
<span class="t" style="left:1351.13px;top:425.60px;font-size:10.8px;color:#000;">147.375.000,00</span>
<span class="t" style="left:1452.13px;top:425.60px;font-size:10.8px;color:#000;">147.375.000,00</span>
<span class="t" style="left:1435.70px;top:425.60px;font-size:10.8px;color:#000;">-</span>
<span class="t" style="left:1655.20px;top:425.60px;font-size:10.8px;color:#000;transform:scaleX(0.9851);">PRIMA USAHA ERA MA</span>
<span class="t" style="left:40.78px;top:443.60px;font-size:10.8px;color:#000;">308</span>
<span class="t" style="left:64.20px;top:443.60px;font-size:10.8px;color:#000;transform:scaleX(1.0030);">BCA-THJ/2025/308</span>
<span class="t" style="left:178.25px;top:443.60px;font-size:10.8px;color:#000;transform:scaleX(1.0610);">16/06/2025</span>
<span class="t" style="left:241.20px;top:443.60px;font-size:10.8px;color:#000;">1000.03</span>
<span class="t" style="left:316.20px;top:443.60px;font-size:10.8px;color:#000;">4000.02</span>
<span class="t" style="left:401.20px;top:443.60px;font-size:10.8px;color:#000;transform:scaleX(0.9599);">PT BUMI BERKAH BOG</span>
<span class="t" style="left:757.13px;top:443.60px;font-size:10.8px;color:#000;">483.900.900,00</span>
<span class="t" style="left:958.13px;top:443.60px;font-size:10.8px;color:#000;">670.278.068,00</span>
<span class="t" style="left:1088.79px;top:443.60px;font-size:10.8px;color:#000;">6</span>
<span class="t" style="left:1116.13px;top:443.60px;font-size:10.8px;color:#000;">248.729.700,00</span>
<span class="t" style="left:1351.13px;top:443.60px;font-size:10.8px;color:#000;">483.900.900,00</span>
<span class="t" style="left:1452.13px;top:443.60px;font-size:10.8px;color:#000;">483.900.900,00</span>
<span class="t" style="left:1435.70px;top:443.60px;font-size:10.8px;color:#000;">-</span>
<span class="t" style="left:1655.20px;top:443.60px;font-size:10.8px;color:#000;transform:scaleX(0.9599);">PT BUMI BERKAH BOG</span>
<span class="t" style="left:401.20px;top:461.60px;font-size:10.8px;color:#000;transform:scaleX(0.9599);">PT BUMI BERKAH BOG</span>
<span class="t" style="left:1116.13px;top:461.60px;font-size:10.8px;color:#000;">235.171.200,00</span>
<span class="t" style="left:1655.20px;top:461.60px;font-size:10.8px;color:#000;transform:scaleX(0.9599);">PT BUMI BERKAH BOG</span>
<span class="t" style="left:40.78px;top:478.60px;font-size:10.8px;color:#000;">375</span>
<span class="t" style="left:64.20px;top:478.60px;font-size:10.8px;color:#000;transform:scaleX(1.0030);">BCA-THJ/2025/375</span>
<span class="t" style="left:178.25px;top:478.60px;font-size:10.8px;color:#000;transform:scaleX(1.0610);">24/06/2025</span>
<span class="t" style="left:241.20px;top:478.60px;font-size:10.8px;color:#000;">1000.03</span>
<span class="t" style="left:316.20px;top:478.60px;font-size:10.8px;color:#000;">4000.02</span>
<span class="t" style="left:401.20px;top:478.60px;font-size:10.8px;color:#000;">adv25021358PRIMA USAHA ERA MA</span>
<span class="t" style="left:757.13px;top:478.60px;font-size:10.8px;color:#000;">245.625.000,00</span>
<span class="t" style="left:958.13px;top:478.60px;font-size:10.8px;color:#000;">246.086.468,00</span>
<span class="t" style="left:1088.79px;top:478.60px;font-size:10.8px;color:#000;">6</span>
<span class="t" style="left:1116.13px;top:478.60px;font-size:10.8px;color:#000;">245.625.000,00</span>
<span class="t" style="left:1351.13px;top:478.60px;font-size:10.8px;color:#000;">245.625.000,00</span>
<span class="t" style="left:1452.13px;top:478.60px;font-size:10.8px;color:#000;">245.625.000,00</span>
<span class="t" style="left:1435.70px;top:478.60px;font-size:10.8px;color:#000;">-</span>
<span class="t" style="left:1655.20px;top:478.60px;font-size:10.8px;color:#000;transform:scaleX(0.9851);">PRIMA USAHA ERA MA</span>
<span class="t" style="left:40.78px;top:496.60px;font-size:10.8px;color:#000;">399</span>
<span class="t" style="left:64.20px;top:496.60px;font-size:10.8px;color:#000;transform:scaleX(1.0030);">BCA-THJ/2025/399</span>
<span class="t" style="left:178.25px;top:496.60px;font-size:10.8px;color:#000;transform:scaleX(1.0610);">25/06/2025</span>
<span class="t" style="left:241.20px;top:496.60px;font-size:10.8px;color:#000;">1000.03</span>
<span class="t" style="left:316.20px;top:496.60px;font-size:10.8px;color:#000;">4000.02</span>
<span class="t" style="left:401.20px;top:496.60px;font-size:10.8px;color:#000;transform:scaleX(0.9599);">PT BUMI BERKAH BOG</span>
<span class="t" style="left:757.13px;top:496.60px;font-size:10.8px;color:#000;">514.594.200,00</span>
<span class="t" style="left:958.13px;top:496.60px;font-size:10.8px;color:#000;">547.146.168,00</span>
<span class="t" style="left:1088.79px;top:496.60px;font-size:10.8px;color:#000;">6</span>
<span class="t" style="left:1116.13px;top:496.60px;font-size:10.8px;color:#000;">271.405.800,00</span>
<span class="t" style="left:1351.13px;top:496.60px;font-size:10.8px;color:#000;">514.594.200,00</span>
<span class="t" style="left:1452.13px;top:496.60px;font-size:10.8px;color:#000;">514.594.200,00</span>
<span class="t" style="left:1435.70px;top:496.60px;font-size:10.8px;color:#000;">-</span>
<span class="t" style="left:1655.20px;top:496.60px;font-size:10.8px;color:#000;transform:scaleX(0.9599);">PT BUMI BERKAH BOG</span>
<span class="t" style="left:1116.13px;top:514.60px;font-size:10.8px;color:#000;">243.188.400,00</span>
<span class="t" style="left:1655.20px;top:514.60px;font-size:10.8px;color:#000;transform:scaleX(0.9599);">PT BUMI BERKAH BOG</span>
<span class="t" style="left:40.78px;top:531.60px;font-size:10.8px;color:#000;">407</span>
<span class="t" style="left:64.20px;top:531.60px;font-size:10.8px;color:#000;transform:scaleX(1.0030);">BCA-THJ/2025/407</span>
<span class="t" style="left:178.25px;top:531.60px;font-size:10.8px;color:#000;transform:scaleX(1.0610);">26/06/2025</span>
<span class="t" style="left:241.20px;top:531.60px;font-size:10.8px;color:#000;">1000.03</span>
<span class="t" style="left:316.20px;top:531.60px;font-size:10.8px;color:#000;">4000.02</span>
<span class="t" style="left:401.20px;top:531.60px;font-size:10.8px;color:#000;transform:scaleX(1.0027);">adv-25021383PRIMA USAHA ERA MA</span>
<span class="t" style="left:757.13px;top:531.60px;font-size:10.8px;color:#000;">147.375.000,00</span>
<span class="t" style="left:958.13px;top:531.60px;font-size:10.8px;color:#000;">194.521.168,00</span>
<span class="t" style="left:1088.79px;top:531.60px;font-size:10.8px;color:#000;">6</span>
<span class="t" style="left:1116.13px;top:531.60px;font-size:10.8px;color:#000;">147.375.000,00</span>
<span class="t" style="left:1351.13px;top:531.60px;font-size:10.8px;color:#000;">147.375.000,00</span>
<span class="t" style="left:1452.13px;top:531.60px;font-size:10.8px;color:#000;">147.375.000,00</span>
<span class="t" style="left:1435.70px;top:531.60px;font-size:10.8px;color:#000;">-</span>
<span class="t" style="left:1655.20px;top:531.60px;font-size:10.8px;color:#000;transform:scaleX(0.9851);">PRIMA USAHA ERA MA</span>
<span class="t" style="left:40.78px;top:548.60px;font-size:10.8px;color:#000;">408</span>
<span class="t" style="left:64.20px;top:548.60px;font-size:10.8px;color:#000;transform:scaleX(1.0030);">BCA-THJ/2025/408</span>
<span class="t" style="left:178.25px;top:548.60px;font-size:10.8px;color:#000;transform:scaleX(1.0610);">26/06/2025</span>
<span class="t" style="left:241.20px;top:548.60px;font-size:10.8px;color:#000;">1000.03</span>
<span class="t" style="left:316.20px;top:548.60px;font-size:10.8px;color:#000;">4000.02</span>
<span class="t" style="left:401.20px;top:548.60px;font-size:10.8px;color:#000;transform:scaleX(1.0027);">adv-25021384PRIMA USAHA ERA MA</span>
<span class="t" style="left:763.13px;top:548.60px;font-size:10.8px;color:#000;">98.250.000,00</span>
<span class="t" style="left:958.13px;top:548.60px;font-size:10.8px;color:#000;">292.771.168,00</span>
<span class="t" style="left:1088.79px;top:548.60px;font-size:10.8px;color:#000;">6</span>
<span class="t" style="left:1122.13px;top:548.60px;font-size:10.8px;color:#000;">98.250.000,00</span>
<span class="t" style="left:1357.13px;top:548.60px;font-size:10.8px;color:#000;">98.250.000,00</span>
<span class="t" style="left:1458.13px;top:548.60px;font-size:10.8px;color:#000;">98.250.000,00</span>
<span class="t" style="left:1435.70px;top:548.60px;font-size:10.8px;color:#000;">-</span>
<span class="t" style="left:1655.20px;top:548.60px;font-size:10.8px;color:#000;transform:scaleX(0.9851);">PRIMA USAHA ERA MA</span>
<span class="t" style="left:40.78px;top:565.60px;font-size:10.8px;color:#000;">529</span>
<span class="t" style="left:64.20px;top:565.60px;font-size:10.8px;color:#000;transform:scaleX(1.0030);">BCA-THJ/2025/529</span>
<span class="t" style="left:178.25px;top:565.60px;font-size:10.8px;color:#000;transform:scaleX(1.0610);">24/07/2025</span>
<span class="t" style="left:241.20px;top:565.60px;font-size:10.8px;color:#000;">1000.03</span>
<span class="t" style="left:316.20px;top:565.60px;font-size:10.8px;color:#000;">4000.02</span>
<span class="t" style="left:401.20px;top:565.60px;font-size:10.8px;color:#000;">adv25021629PRIMA USAHA ERA MA</span>
<span class="t" style="left:757.13px;top:565.60px;font-size:10.8px;color:#000;">147.375.000,00</span>
<span class="t" style="left:958.13px;top:565.60px;font-size:10.8px;color:#000;">154.083.924,00</span>
<span class="t" style="left:1088.79px;top:565.60px;font-size:10.8px;color:#000;">7</span>
<span class="t" style="left:1116.13px;top:565.60px;font-size:10.8px;color:#000;">147.375.000,00</span>
<span class="t" style="left:1351.13px;top:565.60px;font-size:10.8px;color:#000;">147.375.000,00</span>
<span class="t" style="left:1452.13px;top:565.60px;font-size:10.8px;color:#000;">147.375.000,00</span>
<span class="t" style="left:1435.70px;top:565.60px;font-size:10.8px;color:#000;">-</span>
<span class="t" style="left:1655.20px;top:565.60px;font-size:10.8px;color:#000;transform:scaleX(0.9851);">PRIMA USAHA ERA MA</span>
<span class="t" style="left:40.78px;top:582.60px;font-size:10.8px;color:#000;">553</span>
<span class="t" style="left:64.20px;top:582.60px;font-size:10.8px;color:#000;transform:scaleX(1.0030);">BCA-THJ/2025/553</span>
<span class="t" style="left:178.25px;top:582.60px;font-size:10.8px;color:#000;transform:scaleX(1.0610);">25/09/2025</span>
<span class="t" style="left:241.20px;top:582.60px;font-size:10.8px;color:#000;">1000.03</span>
<span class="t" style="left:316.20px;top:582.60px;font-size:10.8px;color:#000;">4000.02</span>
<span class="t" style="left:401.20px;top:582.60px;font-size:10.8px;color:#000;transform:scaleX(1.0617);">mka/017/thj/vi/202 PRIMA USAHA ERA MA</span>
<span class="t" style="left:763.13px;top:582.60px;font-size:10.8px;color:#000;">24.559.500,00</span>
<span class="t" style="left:964.13px;top:582.60px;font-size:10.8px;color:#000;">32.321.924,00</span>
<span class="t" style="left:1088.79px;top:582.60px;font-size:10.8px;color:#000;">9</span>
<span class="t" style="left:1122.13px;top:582.60px;font-size:10.8px;color:#000;">24.559.500,00</span>
<span class="t" style="left:1357.13px;top:582.60px;font-size:10.8px;color:#000;">24.559.500,00</span>
<span class="t" style="left:1458.13px;top:582.60px;font-size:10.8px;color:#000;">24.559.500,00</span>
<span class="t" style="left:1435.70px;top:582.60px;font-size:10.8px;color:#000;">-</span>
<span class="t" style="left:1655.20px;top:582.60px;font-size:10.8px;color:#000;transform:scaleX(0.9851);">PRIMA USAHA ERA MA</span>
<span class="t" style="left:40.78px;top:599.60px;font-size:10.8px;color:#000;">563</span>
<span class="t" style="left:64.20px;top:599.60px;font-size:10.8px;color:#000;transform:scaleX(1.0030);">BCA-THJ/2025/563</span>
<span class="t" style="left:179.95px;top:599.60px;font-size:10.8px;color:#000;transform:scaleX(1.0610);">11/11/2025</span>
<span class="t" style="left:241.20px;top:599.60px;font-size:10.8px;color:#000;">1000.03</span>
<span class="t" style="left:316.20px;top:599.60px;font-size:10.8px;color:#000;">4000.02</span>
<span class="t" style="left:401.20px;top:599.60px;font-size:10.8px;color:#000;transform:scaleX(0.9498);">PT BUMI BERKAH BOG (LLG-HSBC)</span>
<span class="t" style="left:757.13px;top:599.60px;font-size:10.8px;color:#000;">308.347.800,00</span>
<span class="t" style="left:958.13px;top:599.60px;font-size:10.8px;color:#000;">309.959.724,00</span>
<span class="t" style="left:1083.59px;top:599.60px;font-size:10.8px;color:#000;">11</span>
<span class="t" style="left:1116.13px;top:599.60px;font-size:10.8px;color:#000;">308.347.800,00</span>
<span class="t" style="left:1351.13px;top:599.60px;font-size:10.8px;color:#000;">308.347.800,00</span>
<span class="t" style="left:1452.13px;top:599.60px;font-size:10.8px;color:#000;">308.347.800,00</span>
<span class="t" style="left:1435.70px;top:599.60px;font-size:10.8px;color:#000;">-</span>
<span class="t" style="left:1655.20px;top:599.60px;font-size:10.8px;color:#000;transform:scaleX(0.9599);">PT BUMI BERKAH BOG</span>
<span class="t" style="left:40.78px;top:616.60px;font-size:10.8px;color:#000;">569</span>
<span class="t" style="left:64.20px;top:616.60px;font-size:10.8px;color:#000;transform:scaleX(1.0030);">BCA-THJ/2025/569</span>
<span class="t" style="left:178.25px;top:616.60px;font-size:10.8px;color:#000;transform:scaleX(1.0610);">03/12/2025</span>
<span class="t" style="left:241.20px;top:616.60px;font-size:10.8px;color:#000;">1000.03</span>
<span class="t" style="left:316.20px;top:616.60px;font-size:10.8px;color:#000;">4000.02</span>
<span class="t" style="left:401.20px;top:616.60px;font-size:10.8px;color:#000;transform:scaleX(0.9599);">PT BUMI BERKAH BOG</span>
<span class="t" style="left:763.13px;top:616.60px;font-size:10.8px;color:#000;">21.222.000,00</span>
<span class="t" style="left:964.13px;top:616.60px;font-size:10.8px;color:#000;">26.151.724,00</span>
<span class="t" style="left:1082.79px;top:616.60px;font-size:10.8px;color:#000;">12</span>
<span class="t" style="left:1122.13px;top:616.60px;font-size:10.8px;color:#000;">21.222.000,00</span>
<span class="t" style="left:1655.20px;top:616.60px;font-size:10.8px;color:#000;transform:scaleX(0.9599);">PT BUMI BERKAH BOG</span>
<span class="t" style="left:40.78px;top:633.60px;font-size:10.8px;color:#000;">571</span>
<span class="t" style="left:64.20px;top:633.60px;font-size:10.8px;color:#000;transform:scaleX(1.0030);">BCA-THJ/2025/571</span>
<span class="t" style="left:178.25px;top:633.60px;font-size:10.8px;color:#000;transform:scaleX(1.0610);">04/12/2025</span>
<span class="t" style="left:241.20px;top:633.60px;font-size:10.8px;color:#000;">1000.03</span>
<span class="t" style="left:316.20px;top:633.60px;font-size:10.8px;color:#000;">4000.02</span>
<span class="t" style="left:401.20px;top:633.60px;font-size:10.8px;color:#000;transform:scaleX(0.9599);">PT BUMI BERKAH BOG</span>
<span class="t" style="left:757.13px;top:633.60px;font-size:10.8px;color:#000;">293.964.000,00</span>
<span class="t" style="left:958.93px;top:633.60px;font-size:10.8px;color:#000;">370.115.724,00</span>
<span class="t" style="left:1082.79px;top:633.60px;font-size:10.8px;color:#000;">12</span>
<span class="t" style="left:1116.13px;top:633.60px;font-size:10.8px;color:#000;">293.964.000,00</span>
<span class="t" style="left:1655.20px;top:633.60px;font-size:10.8px;color:#000;transform:scaleX(0.9599);">PT BUMI BERKAH BOG</span>
<span class="t" style="left:40.78px;top:650.60px;font-size:10.8px;color:#000;">573</span>
<span class="t" style="left:64.20px;top:650.60px;font-size:10.8px;color:#000;transform:scaleX(1.0030);">BCA-THJ/2025/573</span>
<span class="t" style="left:178.25px;top:650.60px;font-size:10.8px;color:#000;transform:scaleX(1.0610);">05/12/2025</span>
<span class="t" style="left:241.20px;top:650.60px;font-size:10.8px;color:#000;">1000.03</span>
<span class="t" style="left:316.20px;top:650.60px;font-size:10.8px;color:#000;">4000.02</span>
<span class="t" style="left:401.20px;top:650.60px;font-size:10.8px;color:#000;transform:scaleX(0.9713);">DT1B/PELUNASAN SLP (PRIMA USAHA ERA MA)</span>
<span class="t" style="left:763.13px;top:650.60px;font-size:10.8px;color:#000;">54.034.500,00</span>
<span class="t" style="left:958.13px;top:650.60px;font-size:10.8px;color:#000;">124.150.224,00</span>
<span class="t" style="left:1082.79px;top:650.60px;font-size:10.8px;color:#000;">12</span>
<span class="t" style="left:1122.13px;top:650.60px;font-size:10.8px;color:#000;">54.034.500,00</span>
<span class="t" style="left:1655.20px;top:650.60px;font-size:10.8px;color:#000;transform:scaleX(0.9851);">PRIMA USAHA ERA MA</span>
<span class="t" style="left:40.78px;top:667.60px;font-size:10.8px;color:#000;">574</span>
<span class="t" style="left:64.20px;top:667.60px;font-size:10.8px;color:#000;transform:scaleX(1.0030);">BCA-THJ/2025/574</span>
<span class="t" style="left:178.25px;top:667.60px;font-size:10.8px;color:#000;transform:scaleX(1.0610);">05/12/2025</span>
<span class="t" style="left:241.20px;top:667.60px;font-size:10.8px;color:#000;">1000.03</span>
<span class="t" style="left:316.20px;top:667.60px;font-size:10.8px;color:#000;">4000.02</span>
<span class="t" style="left:401.20px;top:667.60px;font-size:10.8px;color:#000;transform:scaleX(0.9688);">TOT3/PELUNASAN SLP (PRIMA USAHA ERA MA)</span>
<span class="t" style="left:763.13px;top:667.60px;font-size:10.8px;color:#000;">58.947.000,00</span>
<span class="t" style="left:958.13px;top:667.60px;font-size:10.8px;color:#000;">183.097.224,00</span>
<span class="t" style="left:1082.79px;top:667.60px;font-size:10.8px;color:#000;">12</span>
<span class="t" style="left:1122.13px;top:667.60px;font-size:10.8px;color:#000;">58.947.000,00</span>
<span class="t" style="left:1655.20px;top:667.60px;font-size:10.8px;color:#000;transform:scaleX(0.9851);">PRIMA USAHA ERA MA</span>
<span class="t" style="left:40.78px;top:684.60px;font-size:10.8px;color:#000;">576</span>
<span class="t" style="left:64.20px;top:684.60px;font-size:10.8px;color:#000;transform:scaleX(1.0030);">BCA-THJ/2025/576</span>
<span class="t" style="left:178.25px;top:684.60px;font-size:10.8px;color:#000;transform:scaleX(1.0610);">12/12/2025</span>
<span class="t" style="left:241.20px;top:684.60px;font-size:10.8px;color:#000;">1000.03</span>
<span class="t" style="left:316.20px;top:684.60px;font-size:10.8px;color:#000;">4000.02</span>
<span class="t" style="left:401.20px;top:684.60px;font-size:10.8px;color:#000;transform:scaleX(0.9697);">AT2/PELUNASAN SLPL (PRIMA USAHA ERA MA)</span>
<span class="t" style="left:763.13px;top:684.60px;font-size:10.8px;color:#000;">81.709.547,00</span>
<span class="t" style="left:958.13px;top:684.60px;font-size:10.8px;color:#000;">259.746.771,00</span>
<span class="t" style="left:1082.79px;top:684.60px;font-size:10.8px;color:#000;">12</span>
<span class="t" style="left:1122.13px;top:684.60px;font-size:10.8px;color:#000;">81.709.547,00</span>
<span class="t" style="left:1655.20px;top:684.60px;font-size:10.8px;color:#000;transform:scaleX(0.9851);">PRIMA USAHA ERA MA</span>
<span class="t" style="left:40.78px;top:701.60px;font-size:10.8px;color:#000;">577</span>
<span class="t" style="left:64.20px;top:701.60px;font-size:10.8px;color:#000;transform:scaleX(1.0030);">BCA-THJ/2025/577</span>
<span class="t" style="left:178.25px;top:701.60px;font-size:10.8px;color:#000;transform:scaleX(1.0610);">12/12/2025</span>
<span class="t" style="left:241.20px;top:701.60px;font-size:10.8px;color:#000;">1000.03</span>
<span class="t" style="left:316.20px;top:701.60px;font-size:10.8px;color:#000;">4000.02</span>
<span class="t" style="left:401.20px;top:701.60px;font-size:10.8px;color:#000;transform:scaleX(0.9688);">TOT2/PELUNASAN SLP (PRIMA USAHA ERA MA)</span>
<span class="t" style="left:757.13px;top:701.60px;font-size:10.8px;color:#000;">196.497.000,00</span>
<span class="t" style="left:958.13px;top:701.60px;font-size:10.8px;color:#000;">456.243.771,00</span>
<span class="t" style="left:1082.79px;top:701.60px;font-size:10.8px;color:#000;">12</span>
<span class="t" style="left:1116.13px;top:701.60px;font-size:10.8px;color:#000;">196.497.000,00</span>
<span class="t" style="left:1655.20px;top:701.60px;font-size:10.8px;color:#000;transform:scaleX(0.9851);">PRIMA USAHA ERA MA</span>
<span class="t" style="left:40.78px;top:718.60px;font-size:10.8px;color:#000;">601</span>
<span class="t" style="left:64.20px;top:718.60px;font-size:10.8px;color:#000;transform:scaleX(1.0030);">BCA-THJ/2025/601</span>
<span class="t" style="left:178.25px;top:718.60px;font-size:10.8px;color:#000;transform:scaleX(1.0610);">29/12/2025</span>
<span class="t" style="left:241.20px;top:718.60px;font-size:10.8px;color:#000;">1000.03</span>
<span class="t" style="left:316.20px;top:718.60px;font-size:10.8px;color:#000;">4000.02</span>
<span class="t" style="left:401.20px;top:718.60px;font-size:10.8px;color:#000;transform:scaleX(1.0315);">DP1 30% Fitout SMB-BKS - PT Pendekar Bodoh</span>
<span class="t" style="left:757.13px;top:718.60px;font-size:10.8px;color:#000;">338.962.500,00</span>
<span class="t" style="left:958.13px;top:718.60px;font-size:10.8px;color:#000;">365.380.203,00</span>
<span class="t" style="left:1082.79px;top:718.60px;font-size:10.8px;color:#000;">12</span>
<span class="t" style="left:1116.13px;top:718.60px;font-size:10.8px;color:#000;">338.962.500,00</span>
<span class="t" style="left:1655.20px;top:718.60px;font-size:10.8px;color:#000;transform:scaleX(1.0642);">PT Pendekar Bodoh</span>
<span class="t" style="left:40.78px;top:735.60px;font-size:10.8px;color:#000;">604</span>
<span class="t" style="left:64.20px;top:735.60px;font-size:10.8px;color:#000;transform:scaleX(1.0030);">BCA-THJ/2025/604</span>
<span class="t" style="left:178.25px;top:735.60px;font-size:10.8px;color:#000;transform:scaleX(1.0610);">31/12/2025</span>
<span class="t" style="left:241.20px;top:735.60px;font-size:10.8px;color:#000;">1000.03</span>
<span class="t" style="left:316.20px;top:735.60px;font-size:10.8px;color:#000;">4000.02</span>
<span class="t" style="left:401.20px;top:735.60px;font-size:10.8px;color:#000;transform:scaleX(1.0793);">Pelunasan SIPI - Prima Usaha Era Ma</span>
<span class="t" style="left:757.13px;top:735.60px;font-size:10.8px;color:#000;">294.747.000,00</span>
<span class="t" style="left:958.13px;top:735.60px;font-size:10.8px;color:#000;">360.127.203,00</span>
<span class="t" style="left:1082.79px;top:735.60px;font-size:10.8px;color:#000;">12</span>
<span class="t" style="left:1116.13px;top:735.60px;font-size:10.8px;color:#000;">294.747.000,00</span>
<span class="t" style="left:1655.20px;top:735.60px;font-size:10.8px;color:#000;transform:scaleX(0.9851);">PRIMA USAHA ERA MA</span>
<div class="b" style="left:1096px;top:650px;width:103px;height:20px;border:2px solid #217346;"></div>
<div class="b" style="left:1195px;top:666px;width:6px;height:6px;background:#217346;border:1px solid #fff;"></div>
<div class="b" style="left:1899px;top:205px;width:21px;height:777px;background:#fff;"></div>
<div class="b" style="left:1902px;top:209px;width:15px;height:14px;background:#fff;border:1px solid #ababab;"></div>
<svg class="b" style="left:1902px;top:209px;" width="15" height="14" viewBox="0 0 15 14"><path d="M3.5 9.5 L7.5 4.5 L11.5 9.5 Z" fill="#333"/></svg>
<div class="b" style="left:1902px;top:224px;width:15px;height:741px;background:#fff;border:1px solid #ababab;"></div>
<div class="b" style="left:1902px;top:967px;width:15px;height:15px;background:#fff;border:1px solid #ababab;"></div>
<svg class="b" style="left:1902px;top:967px;" width="15" height="14" viewBox="0 0 15 14"><path d="M3.5 4.5 L7.5 9.5 L11.5 4.5 Z" fill="#333"/></svg>
<div class="b" style="left:0px;top:33px;width:1920px;height:1px;background:#e1e1e1;"></div>
<svg class="b" style="left:19px;top:9px;" width="18" height="18" viewBox="0 0 18 18"><path d="M1.5 1.5 H14 L16.5 4 V16.5 H1.5 Z" fill="#e9b8ea" stroke="#9b3fa0" stroke-width="1.6"/><rect x="4.5" y="1.5" width="8" height="5" fill="#fff" stroke="#9b3fa0" stroke-width="1.3"/><rect x="4.5" y="10.5" width="9" height="6" fill="#fff" stroke="#9b3fa0" stroke-width="1.3"/></svg>
<svg class="b" style="left:49px;top:8px;" width="20" height="20" viewBox="0 0 20 20"><path d="M3 3.5 V9.5 H9" fill="none" stroke="#3b3b3b" stroke-width="1.5"/><path d="M3.5 9 C6 4 13 3.5 14.5 8 C15.5 12 12 14.5 8.5 17.5" fill="none" stroke="#3b3b3b" stroke-width="1.5"/></svg>
<svg class="b" style="left:70px;top:12px;" width="10" height="10" viewBox="0 0 10 10"><path d="M2.4 3.7 L5 6.3 L7.6 3.7" fill="none" stroke="#3b3b3b" stroke-width="1.3"/></svg>
<svg class="b" style="left:88px;top:8px;" width="20" height="20" viewBox="0 0 20 20"><path d="M16 3.5 V9.5 H10" fill="none" stroke="#b9b9b9" stroke-width="1.5"/><path d="M15.5 9 C13 4 6 3.5 4.5 8 C3.5 12 7 14.5 10.5 17.5" fill="none" stroke="#b9b9b9" stroke-width="1.5"/></svg>
<svg class="b" style="left:108px;top:12px;" width="10" height="10" viewBox="0 0 10 10"><path d="M2.4 3.7 L5 6.3 L7.6 3.7" fill="none" stroke="#c4c4c4" stroke-width="1.3"/></svg>
<svg class="b" style="left:129px;top:10px;" width="12" height="14" viewBox="0 0 12 14"><path d="M2 3.5 H10" stroke="#3b3b3b" stroke-width="1.3"/><path d="M2.5 7 L6 10.5 L9.5 7" fill="none" stroke="#3b3b3b" stroke-width="1.3"/></svg>
<span class="t" style="left:283.00px;top:7.50px;font-size:12px;color:#262626;transform:scaleX(0.9401);">THJ_Kertas Kerja Accounting_2025.xlsx</span>
<span class="t" style="left:491.30px;top:7.50px;font-size:12px;color:#262626;">-</span>
<span class="t" style="left:502.30px;top:7.50px;font-size:12px;color:#262626;transform:scaleX(0.9800);">Microsoft Excel (Safe Mode)</span>
<div class="b" style="left:784px;top:5px;width:368px;height:23px;background:#fff;border:1px solid #8a8a8a;"></div>
<svg class="b" style="left:802px;top:8px;" width="18" height="18" viewBox="0 0 18 18"><circle cx="11" cy="6.5" r="4.6" fill="none" stroke="#555" stroke-width="1.2"/><path d="M7.8 9.8 L2.5 15" stroke="#555" stroke-width="1.3"/></svg>
<span class="t" style="left:834.00px;top:7.00px;font-size:12px;color:#5c5c5c;transform:scaleX(0.9205);">Search</span>
<div class="b" style="left:1622px;top:7px;width:58px;height:19px;background:#1f1f1f;"></div>
<span class="t" style="left:1633.20px;top:7.00px;font-size:12px;color:#fff;transform:scaleX(0.9700);">Sign in</span>
<svg class="b" style="left:1703px;top:7px;" width="20" height="20" viewBox="0 0 20 20"><path d="M3.5 15.5 L11 5.5 L15 9 L7.5 17.5 Z" fill="none" stroke="#333" stroke-width="1.2"/><path d="M4 15 C6 14 8 16 7.5 17.5" fill="none" stroke="#333" stroke-width="1.1"/><path d="M14 3 L15 1.5 M16.5 5 L18 4 M17 8 L18.5 8" stroke="#2b7cd3" stroke-width="1.1"/></svg>
<svg class="b" style="left:1751px;top:10px;" width="15" height="13" viewBox="0 0 15 13"><rect x="0.5" y="0.5" width="13" height="10" fill="none" stroke="#333" stroke-width="1"/><path d="M0.5 3 H13.5" stroke="#333" stroke-width="1"/><path d="M7 9.5 V5 M5 6.8 L7 4.8 L9 6.8" fill="none" stroke="#333" stroke-width="1"/></svg>
<div class="b" style="left:1800px;top:15px;width:10px;height:1px;background:#333;"></div>
<svg class="b" style="left:1845px;top:11px;" width="12" height="12" viewBox="0 0 12 12"><rect x="0.5" y="2.5" width="8" height="8" rx="1.5" fill="none" stroke="#333" stroke-width="1"/><path d="M3 0.8 H9 Q10.8 0.8 10.8 2.6 V8.5" fill="none" stroke="#333" stroke-width="1"/></svg>
<svg class="b" style="left:1891px;top:11px;" width="12" height="12" viewBox="0 0 12 12"><path d="M0.5 0.5 L10.5 10.5 M10.5 0.5 L0.5 10.5" stroke="#333" stroke-width="1.1"/></svg>
<div class="b" style="left:0px;top:34px;width:54px;height:30px;background:#217346;"></div>
<span class="t" style="left:17.03px;top:39.60px;font-size:13.3px;color:#fff;transform:scaleX(0.9300);">File</span>
<span class="t" style="left:68.00px;top:39.60px;font-size:13.3px;color:#262626;transform:scaleX(1.0570);-webkit-text-stroke:0.2px #262626;">Home</span>
<span class="t" style="left:133.00px;top:39.60px;font-size:13.3px;color:#444444;transform:scaleX(0.9620);">Insert</span>
<span class="t" style="left:194.00px;top:39.60px;font-size:13.3px;color:#444444;transform:scaleX(0.9827);">Draw</span>
<span class="t" style="left:254.00px;top:39.60px;font-size:13.3px;color:#444444;transform:scaleX(0.9506);">Page Layout</span>
<span class="t" style="left:355.00px;top:39.60px;font-size:13.3px;color:#444444;transform:scaleX(0.9562);">Formulas</span>
<span class="t" style="left:437.00px;top:39.60px;font-size:13.3px;color:#444444;transform:scaleX(0.9611);">Data</span>
<span class="t" style="left:493.00px;top:39.60px;font-size:13.3px;color:#444444;transform:scaleX(0.9287);">Review</span>
<span class="t" style="left:561.00px;top:39.60px;font-size:13.3px;color:#444444;transform:scaleX(0.9444);">View</span>
<span class="t" style="left:616.00px;top:39.60px;font-size:13.3px;color:#444444;transform:scaleX(0.9870);">Help</span>
<div class="b" style="left:68px;top:59px;width:38px;height:3px;background:#217346;"></div>
<div class="b" style="left:1827px;top:38px;width:81px;height:23px;background:#fff;border:1px solid #b5d3c2;border-radius:2px;"></div>
<svg class="b" style="left:1833px;top:42px;" width="16" height="15" viewBox="0 0 16 15"><path d="M2 7 V13.5 H12 V10" fill="none" stroke="#b9cdc2" stroke-width="1.2"/><path d="M5 9.5 C5.5 6 8 4.5 10.5 4.5 V2 L14.5 5.5 L10.5 9 V6.8 C8 6.8 6.5 7.5 5 9.5 Z" fill="none" stroke="#b9cdc2" stroke-width="1.1"/></svg>
<span class="t" style="left:1851.00px;top:39.50px;font-size:13px;color:#a6cdb9;transform:scaleX(0.9945);">Share</span>
<div class="b" style="left:1892px;top:42px;width:1px;height:15px;background:#f1f7f4;"></div>
<svg class="b" style="left:1894.5px;top:45px;" width="10" height="10" viewBox="0 0 10 10"><path d="M2.6 3.8 L5 6.2 L7.4 3.8" fill="none" stroke="#a6cdb9" stroke-width="1.3"/></svg>
<div class="b" style="left:0px;top:160px;width:1920px;height:1px;background:#d2d2d2;"></div>
<div class="b" style="left:0px;top:161px;width:1920px;height:1px;background:#e6e6e6;"></div>
<div class="b" style="left:0px;top:162px;width:1920px;height:1px;background:#f3f3f3;"></div>
<div class="b" style="left:0px;top:163px;width:1920px;height:1px;background:#fafafa;"></div>
<div class="b" style="left:5px;top:171px;width:102px;height:26px;background:#fff;border:1px solid #c6c6c6;"></div>
<span class="t" style="left:12.00px;top:174.50px;font-size:12px;color:#333;transform:scaleX(1.0169);">P579</span>
<svg class="b" style="left:91px;top:181px;" width="10" height="8" viewBox="0 0 10 8"><path d="M1 1.5 H9 L5 6 Z" fill="#666"/></svg>
<div class="b" style="left:121px;top:179px;width:2px;height:2px;background:#b0b0b0;"></div>
<div class="b" style="left:121px;top:183px;width:2px;height:2px;background:#b0b0b0;"></div>
<div class="b" style="left:121px;top:187px;width:2px;height:2px;background:#b0b0b0;"></div>
<div class="b" style="left:137px;top:171px;width:110px;height:26px;background:#fff;border:1px solid #c6c6c6;"></div>
<svg class="b" style="left:150px;top:178px;" width="12" height="12" viewBox="0 0 12 12"><path d="M1 1 L11 11 M11 1 L1 11" stroke="#c2c2c2" stroke-width="1.4"/></svg>
<svg class="b" style="left:185px;top:178px;" width="14" height="12" viewBox="0 0 14 12"><path d="M1.5 6.5 L5 10.5 L12.5 1.5" fill="none" stroke="#c2c2c2" stroke-width="1.6"/></svg>
<span class="t" style="left:223.56px;top:174.00px;font-size:14px;color:#444;font-style:italic;font-family:'Liberation Serif',serif;">f</span>
<span class="t" style="left:228.75px;top:177.00px;font-size:9px;color:#444;font-style:italic;font-family:'Liberation Serif',serif;">x</span>
<div class="b" style="left:250px;top:171px;width:1664px;height:26px;background:#fff;border:1px solid #c6c6c6;"></div>
<span class="t" style="left:262.00px;top:174.50px;font-size:12px;color:#262626;transform:scaleX(1.0276);">=K579</span>
<svg class="b" style="left:1900.5px;top:179.5px;" width="10" height="10" viewBox="0 0 10 10"><path d="M2 3.5 L5 6.5 L8 3.5" fill="none" stroke="#444" stroke-width="1.4"/></svg>
<svg class="b" style="left:15px;top:72px;" width="32" height="34" viewBox="0 0 32 34"><rect x="3.5" y="4.5" width="20" height="24" fill="#efefef" stroke="#bdbdbd"/><rect x="9" y="1.5" width="9" height="6" rx="1" fill="#e4e4e4" stroke="#bdbdbd"/><rect x="16.5" y="12.5" width="13" height="17" fill="#f1f1f1" stroke="#bdbdbd"/></svg>
<span class="t" style="left:15.00px;top:102.50px;font-size:12px;color:#a8a8a8;transform:scaleX(0.9288);">Paste</span>
<svg class="b" style="left:23px;top:124px;" width="10" height="10" viewBox="0 0 10 10"><path d="M2.4 3.7 L5 6.3 L7.6 3.7" fill="none" stroke="#b5b5b5" stroke-width="1.3"/></svg>
<svg class="b" style="left:54px;top:71px;" width="16" height="17" viewBox="0 0 16 17"><path d="M4.4 0.8 L9.3 12 M9.7 0.8 L4.7 12" stroke="#444" stroke-width="1.1" fill="none"/><circle cx="3.9" cy="13.7" r="1.7" fill="none" stroke="#2b7cd3" stroke-width="1.1"/><circle cx="10.1" cy="13.7" r="1.7" fill="none" stroke="#2b7cd3" stroke-width="1.1"/></svg>
<span class="t" style="left:72.50px;top:69.50px;font-size:12px;color:#444444;transform:scaleX(0.9907);">Cut</span>
<svg class="b" style="left:52px;top:94px;" width="18" height="19" viewBox="0 0 18 19"><path d="M4.5 14.5 H1.5 V1.5 H8.5 V3" fill="none" stroke="#444" stroke-width="1.1"/><path d="M5.5 4.5 H12 L15.5 8 V17.5 H5.5 Z" fill="#fff" stroke="#444" stroke-width="1.1"/><path d="M8 11 H13 M8 14 H13" stroke="#444" stroke-width="1"/></svg>
<span class="t" style="left:72.50px;top:93.50px;font-size:12px;color:#444444;transform:scaleX(0.9816);">Copy</span>
<svg class="b" style="left:108.5px;top:98.5px;" width="10" height="10" viewBox="0 0 10 10"><path d="M2.4 3.7 L5 6.3 L7.6 3.7" fill="none" stroke="#444444" stroke-width="1.3"/></svg>
<svg class="b" style="left:53px;top:118px;" width="18" height="18" viewBox="0 0 18 18"><path d="M8 7 L14 1.5 L16.5 4 L11 10 Z" fill="#fff" stroke="#444" stroke-width="1.1"/><path d="M2 11 L8 7 L11.5 10.5 L8 16.5 C5 16 3 14 2 11 Z" fill="#f5b04a" stroke="#e07f12" stroke-width="1.1"/></svg>
<span class="t" style="left:72.50px;top:117.50px;font-size:12px;color:#444444;transform:scaleX(0.9765);">Format Painter</span>
<span class="t" style="left:49.00px;top:141.50px;font-size:12px;color:#444444;transform:scaleX(0.9929);">Clipboard</span>
<svg class="b" style="left:153px;top:147px;" width="9" height="9" viewBox="0 0 9 9"><path d="M0.5 3.5 V0.5 H3.5" fill="none" stroke="#666" stroke-width="1"/><path d="M3 3 L7.5 7.5 M7.8 4 V7.8 H4" fill="none" stroke="#666" stroke-width="1"/></svg>
<div class="b" style="left:164px;top:68px;width:1px;height:88px;background:#d8d8d8;"></div>
<div class="b" style="left:173px;top:76px;width:123px;height:23px;background:#fff;border:1px solid #c6c6c6;"></div>
<span class="t" style="left:176.50px;top:77.50px;font-size:12px;color:#262626;transform:scaleX(0.9850);">Calibri</span>
<svg class="b" style="left:284px;top:83.5px;" width="10" height="10" viewBox="0 0 10 10"><path d="M2.4 3.7 L5 6.3 L7.6 3.7" fill="none" stroke="#444444" stroke-width="1.3"/></svg>
<div class="b" style="left:298px;top:76px;width:43px;height:23px;background:#fff;border:1px solid #c6c6c6;"></div>
<span class="t" style="left:301.50px;top:77.50px;font-size:12px;color:#262626;transform:scaleX(0.8830);">11</span>
<svg class="b" style="left:329px;top:83.5px;" width="10" height="10" viewBox="0 0 10 10"><path d="M2.4 3.7 L5 6.3 L7.6 3.7" fill="none" stroke="#444444" stroke-width="1.3"/></svg>
<span class="t" style="left:347.42px;top:75.60px;font-size:16.5px;color:#444444;transform:scaleX(0.9600);">A</span>
<svg class="b" style="left:356px;top:79px;" width="8" height="6" viewBox="0 0 8 6"><path d="M1 4.5 L3.5 1.8 L6 4.5" fill="none" stroke="#3d8fcf" stroke-width="1.2"/></svg>
<span class="t" style="left:373.21px;top:77.10px;font-size:12.5px;color:#444444;transform:scaleX(0.9800);">A</span>
<svg class="b" style="left:380px;top:79px;" width="8" height="6" viewBox="0 0 8 6"><path d="M1 1.5 L3.5 4.2 L6 1.5" fill="none" stroke="#3d8fcf" stroke-width="1.2"/></svg>
<span class="t" style="left:180.07px;top:108.10px;font-size:13px;color:#3b3b3b;transform:scaleX(0.8800);font-weight:700;">B</span>
<span class="t" style="left:205.72px;top:108.10px;font-size:15px;color:#3b3b3b;font-style:italic;font-family:'Liberation Serif',serif;">I</span>
<span class="t" style="left:227.11px;top:108.10px;font-size:12.8px;color:#3b3b3b;transform:scaleX(0.9500);">U</span>
<div class="b" style="left:227px;top:124px;width:9.5px;height:1px;background:#3b3b3b;"></div>
<svg class="b" style="left:244px;top:114.5px;" width="10" height="10" viewBox="0 0 10 10"><path d="M2.4 3.7 L5 6.3 L7.6 3.7" fill="none" stroke="#444444" stroke-width="1.3"/></svg>
<div class="b" style="left:262px;top:107px;width:1px;height:26px;background:#ebebeb;"></div>
<svg class="b" style="left:270px;top:111px;" width="15" height="15" viewBox="0 0 15 15"><rect x="1" y="1" width="13" height="13" fill="#fff" stroke="#111" stroke-width="1.8"/><path d="M7.5 3 V12 M3 7.5 H12" stroke="#666" stroke-width="1" stroke-dasharray="1 1"/></svg>
<svg class="b" style="left:290px;top:114.5px;" width="10" height="10" viewBox="0 0 10 10"><path d="M2.4 3.7 L5 6.3 L7.6 3.7" fill="none" stroke="#444444" stroke-width="1.3"/></svg>
<div class="b" style="left:308px;top:107px;width:1px;height:26px;background:#ebebeb;"></div>
<svg class="b" style="left:315px;top:108px;" width="18" height="20" viewBox="0 0 18 20"><path d="M6 5.5 L11.5 11 L7.5 14.5 L3 10 Z" fill="#fff" stroke="#444" stroke-width="1.1"/><path d="M6 5.5 C6 1.5 10 1.5 9.5 6.5" fill="none" stroke="#444" stroke-width="1.1"/><path d="M12.5 9 C14.5 11 14 13 12.5 13 C11.5 13 11.5 11 12.5 9 Z" fill="#2b7cd3"/><rect x="1" y="15.3" width="16" height="3.2" fill="#21a366"/></svg>
<svg class="b" style="left:336px;top:114.5px;" width="10" height="10" viewBox="0 0 10 10"><path d="M2.4 3.7 L5 6.3 L7.6 3.7" fill="none" stroke="#444444" stroke-width="1.3"/></svg>
<span class="t" style="left:358.40px;top:106.70px;font-size:15px;color:#444444;transform:scaleX(0.9200);">A</span>
<div class="b" style="left:355px;top:123.3px;width:16px;height:3.2px;background:#e81123;"></div>
<svg class="b" style="left:375.5px;top:114.5px;" width="10" height="10" viewBox="0 0 10 10"><path d="M2.4 3.7 L5 6.3 L7.6 3.7" fill="none" stroke="#444444" stroke-width="1.3"/></svg>
<span class="t" style="left:261.00px;top:141.50px;font-size:12px;color:#444444;">Font</span>
<svg class="b" style="left:385px;top:147px;" width="9" height="9" viewBox="0 0 9 9"><path d="M0.5 3.5 V0.5 H3.5" fill="none" stroke="#666" stroke-width="1"/><path d="M3 3 L7.5 7.5 M7.8 4 V7.8 H4" fill="none" stroke="#666" stroke-width="1"/></svg>
<div class="b" style="left:396px;top:68px;width:1px;height:88px;background:#d8d8d8;"></div>
<svg class="b" style="left:409px;top:78px;" width="14" height="14" viewBox="0 0 14 14"><path d="M0.0 1.5 H14.0" stroke="#333" stroke-width="1.3"/><path d="M2.0 5.5 H12.0" stroke="#333" stroke-width="1.3"/><path d="M0.0 9.5 H14.0" stroke="#333" stroke-width="1.3"/></svg>
<svg class="b" style="left:433px;top:78px;" width="14" height="18" viewBox="0 0 14 18"><path d="M0.0 4.5 H14.0" stroke="#333" stroke-width="1.3"/><path d="M2.0 8.5 H12.0" stroke="#333" stroke-width="1.3"/><path d="M0.0 12.5 H14.0" stroke="#333" stroke-width="1.3"/></svg>
<div class="b" style="left:453px;top:76px;width:22px;height:23px;background:#9dd2b4;"></div>
<svg class="b" style="left:457px;top:78px;" width="14" height="20" viewBox="0 0 14 20"><path d="M0.0 8.5 H14.0" stroke="#111" stroke-width="1.3"/><path d="M2.0 12.5 H12.0" stroke="#111" stroke-width="1.3"/><path d="M0.0 16.5 H14.0" stroke="#111" stroke-width="1.3"/></svg>
<svg class="b" style="left:486px;top:76px;" width="22" height="22" viewBox="0 0 22 22"><text x="0" y="0" font-size="10" font-family="Liberation Sans" fill="#444" transform="translate(5.5 13.5) rotate(-52)">ab</text><path d="M6.5 17.5 L16.5 7.8 M12 7.5 H16.8 V12.3" fill="none" stroke="#3d7eb8" stroke-width="1.1"/></svg>
<svg class="b" style="left:506px;top:83px;" width="10" height="10" viewBox="0 0 10 10"><path d="M2.4 3.7 L5 6.3 L7.6 3.7" fill="none" stroke="#444444" stroke-width="1.3"/></svg>
<div class="b" style="left:479px;top:76px;width:1px;height:23px;background:#ebebeb;"></div>
<div class="b" style="left:479px;top:107px;width:1px;height:25px;background:#ebebeb;"></div>
<div class="b" style="left:534px;top:76px;width:1px;height:57px;background:#ebebeb;"></div>
<svg class="b" style="left:543px;top:77px;" width="18" height="19" viewBox="0 0 18 19"><text x="1" y="9.3" font-size="10" font-family="Liberation Sans" fill="#444">ab</text><text x="1" y="17" font-size="10" font-family="Liberation Sans" fill="#444">c</text><path d="M13.8 10.5 C15.5 12.8 13.5 14 11.5 14 H7.5 M10 11.5 L7.5 14 L10 16.5" fill="none" stroke="#3d7eb8" stroke-width="1.1"/></svg>
<span class="t" style="left:561.00px;top:77.50px;font-size:12px;color:#444444;transform:scaleX(0.9705);">Wrap Text</span>
<svg class="b" style="left:409px;top:111px;" width="14" height="16" viewBox="0 0 14 16"><path d="M0 1.5 H14" stroke="#333" stroke-width="1.3"/><path d="M0 5.5 H10" stroke="#333" stroke-width="1.3"/><path d="M0 9.5 H14" stroke="#333" stroke-width="1.3"/><path d="M0 13.5 H10" stroke="#333" stroke-width="1.3"/></svg>
<svg class="b" style="left:433px;top:111px;" width="14" height="16" viewBox="0 0 14 16"><path d="M0.0 1.5 H14.0" stroke="#333" stroke-width="1.3"/><path d="M2.0 5.5 H12.0" stroke="#333" stroke-width="1.3"/><path d="M0.0 9.5 H14.0" stroke="#333" stroke-width="1.3"/><path d="M2.0 13.5 H12.0" stroke="#333" stroke-width="1.3"/></svg>
<svg class="b" style="left:457px;top:111px;" width="14" height="16" viewBox="0 0 14 16"><path d="M0 1.5 H14" stroke="#333" stroke-width="1.3"/><path d="M4 5.5 H14" stroke="#333" stroke-width="1.3"/><path d="M0 9.5 H14" stroke="#333" stroke-width="1.3"/><path d="M4 13.5 H14" stroke="#333" stroke-width="1.3"/></svg>
<svg class="b" style="left:487px;top:111px;" width="16" height="16" viewBox="0 0 16 16"><path d="M1 1.5 H15 M9 5.5 H15 M9 9.5 H15 M1 13.5 H15" stroke="#444" stroke-width="1.2"/><path d="M7 7.5 H1 M3.5 5 L1 7.5 L3.5 10" fill="none" stroke="#3d7eb8" stroke-width="1.2"/></svg>
<svg class="b" style="left:511px;top:111px;" width="16" height="16" viewBox="0 0 16 16"><path d="M1 1.5 H15 M9 5.5 H15 M9 9.5 H15 M1 13.5 H15" stroke="#444" stroke-width="1.2"/><path d="M1 7.5 H7 M4.5 5 L7 7.5 L4.5 10" fill="none" stroke="#3d7eb8" stroke-width="1.2"/></svg>
<svg class="b" style="left:542px;top:111px;" width="15" height="15" viewBox="0 0 15 15"><rect x="0.6" y="0.6" width="13.8" height="13.8" fill="#fff" stroke="#3b3b3b" stroke-width="1.2"/><path d="M0.6 3.5 H14.4 M0.6 11.5 H14.4 M7.5 0.6 V3.5 M7.5 11.5 V14.4" stroke="#3b3b3b" stroke-width="1"/><path d="M2.8 7.5 H12.2 M4.8 5.5 L2.8 7.5 L4.8 9.5 M10.2 5.5 L12.2 7.5 L10.2 9.5" fill="none" stroke="#3d7eb8" stroke-width="1.2"/></svg>
<span class="t" style="left:561.00px;top:109.50px;font-size:12px;color:#444444;transform:scaleX(1.0094);">Merge &amp; Center</span>
<svg class="b" style="left:654.5px;top:114.5px;" width="10" height="10" viewBox="0 0 10 10"><path d="M2.4 3.7 L5 6.3 L7.6 3.7" fill="none" stroke="#444444" stroke-width="1.3"/></svg>
<span class="t" style="left:501.50px;top:141.50px;font-size:12px;color:#444444;transform:scaleX(1.0026);">Alignment</span>
<svg class="b" style="left:665px;top:147px;" width="9" height="9" viewBox="0 0 9 9"><path d="M0.5 3.5 V0.5 H3.5" fill="none" stroke="#666" stroke-width="1"/><path d="M3 3 L7.5 7.5 M7.8 4 V7.8 H4" fill="none" stroke="#666" stroke-width="1"/></svg>
<div class="b" style="left:676px;top:68px;width:1px;height:88px;background:#d8d8d8;"></div>
<div class="b" style="left:685px;top:76px;width:140px;height:23px;background:#fff;border:1px solid #c6c6c6;"></div>
<span class="t" style="left:688.00px;top:77.50px;font-size:12px;color:#262626;transform:scaleX(1.0442);">Accounting</span>
<svg class="b" style="left:813px;top:83.5px;" width="10" height="10" viewBox="0 0 10 10"><path d="M2.4 3.7 L5 6.3 L7.6 3.7" fill="none" stroke="#444444" stroke-width="1.3"/></svg>
<svg class="b" style="left:687px;top:112px;" width="20" height="16" viewBox="0 0 20 16"><rect x="0.8" y="1.8" width="15" height="9" fill="#fff" stroke="#444" stroke-width="1.2"/><circle cx="8.2" cy="6.3" r="2.2" fill="none" stroke="#444" stroke-width="1"/><ellipse cx="14" cy="7.5" rx="3.5" ry="1.5" fill="#fff" stroke="#e07f12" stroke-width="1"/><path d="M10.5 7.5 V13 C10.5 15 17.5 15 17.5 13 V7.5 M10.5 10.2 C10.5 12 17.5 12 17.5 10.2" fill="#fff" stroke="#e07f12" stroke-width="1"/></svg>
<svg class="b" style="left:708.5px;top:114.5px;" width="10" height="10" viewBox="0 0 10 10"><path d="M2.4 3.7 L5 6.3 L7.6 3.7" fill="none" stroke="#444444" stroke-width="1.3"/></svg>
<span class="t" style="left:727.60px;top:109.30px;font-size:18.5px;color:#3b3b3b;transform:scaleX(0.9000);">%</span>
<svg class="b" style="left:753px;top:111px;" width="12" height="16" viewBox="0 0 12 16"><path d="M6 2 C9 2 10 4.5 9.5 7.5 C9 10.5 7 12.5 3.5 13.5 L3 12.3 C5 11.5 6.3 10.3 6.5 8.6 C4.5 8.8 3 7.5 3 5.3 C3 3.3 4.3 2 6 2 Z" fill="#333"/></svg>
<div class="b" style="left:774px;top:107px;width:1px;height:26px;background:#ebebeb;"></div>
<svg class="b" style="left:781px;top:109px;" width="18" height="18" viewBox="0 0 18 18"><text x="12" y="8.6" font-size="9" font-family="Liberation Sans" fill="#444">0</text><text x="4" y="16.8" font-size="9" font-family="Liberation Sans" fill="#444">.00</text><path d="M10.5 5.5 H1.8 M4.3 3 L1.8 5.5 L4.3 8" fill="none" stroke="#3d7eb8" stroke-width="1.1"/></svg>
<svg class="b" style="left:805px;top:109px;" width="18" height="18" viewBox="0 0 18 18"><text x="4" y="8.6" font-size="9" font-family="Liberation Sans" fill="#444">.00</text><text x="9.5" y="16.8" font-size="9" font-family="Liberation Sans" fill="#444">.0</text><path d="M1 13.5 H9.2 M6.7 11 L9.2 13.5 L6.7 16" fill="none" stroke="#3d7eb8" stroke-width="1.1"/></svg>
<span class="t" style="left:726.00px;top:141.50px;font-size:12px;color:#444444;transform:scaleX(0.9606);">Number</span>
<svg class="b" style="left:821px;top:147px;" width="9" height="9" viewBox="0 0 9 9"><path d="M0.5 3.5 V0.5 H3.5" fill="none" stroke="#666" stroke-width="1"/><path d="M3 3 L7.5 7.5 M7.8 4 V7.8 H4" fill="none" stroke="#666" stroke-width="1"/></svg>
<div class="b" style="left:832px;top:68px;width:1px;height:88px;background:#d8d8d8;"></div>
<svg class="b" style="left:864px;top:75px;" width="28" height="22" viewBox="0 0 28 22"><rect x="0.5" y="0.5" width="27" height="21" fill="#fff"/><rect x="5.5" y="0.5" width="12" height="7" fill="#fb7f84"/><rect x="5.5" y="7.5" width="8" height="7" fill="#5b9bd5"/><rect x="5.5" y="14.5" width="14" height="7" fill="#fb7f84"/><path d="M0.5 0.5 H27.5 V21.5 H0.5 Z M5.5 0.5 V21.5 M22.5 0.5 V21.5 M17.5 0.5 V7.5 M13.5 7.5 V14.5 M19.5 14.5 V21.5 M0.5 7.5 H27.5 M0.5 14.5 H27.5" stroke="#262626" fill="none"/></svg>
<span class="t" style="left:847.00px;top:102.50px;font-size:12px;color:#444444;transform:scaleX(1.0326);">Conditional</span>
<span class="t" style="left:843.00px;top:118.50px;font-size:12px;color:#444444;transform:scaleX(0.9938);">Formatting</span>
<svg class="b" style="left:902.5px;top:124px;" width="10" height="10" viewBox="0 0 10 10"><path d="M2.4 3.7 L5 6.3 L7.6 3.7" fill="none" stroke="#444444" stroke-width="1.3"/></svg>
<svg class="b" style="left:930px;top:75px;" width="33" height="28" viewBox="0 0 33 28"><rect x="0.5" y="0.5" width="27" height="21" fill="#fff"/><rect x="9.5" y="7.5" width="18" height="14" fill="#6aa9e6"/><path d="M0.5 0.5 H27.5 V21.5 H0.5 Z M9.5 0.5 V21.5 M18.5 0.5 V21.5 M0.5 7.5 H27.5 M0.5 14.5 H27.5" stroke="#262626" fill="none"/><path d="M29.5 7.5 L18.5 19.5" stroke="#fff" stroke-width="5"/><path d="M28.3 7 L17.5 18.5 L20 20.5 L30.2 8.6 Z" fill="#f6efe6" stroke="#3a3a3a" stroke-width="1"/><path d="M17.2 18.2 C13.5 17.5 12.5 22 8 23.2 C12 26.5 18.5 25.5 20.3 20.8 Z" fill="#4a90d9" stroke="#3a78b8" stroke-width=".6"/></svg>
<span class="t" style="left:918.40px;top:102.50px;font-size:12px;color:#444444;transform:scaleX(0.9553);">Format as</span>
<span class="t" style="left:926.00px;top:118.50px;font-size:12px;color:#444444;transform:scaleX(0.9063);">Table</span>
<svg class="b" style="left:953.5px;top:124px;" width="10" height="10" viewBox="0 0 10 10"><path d="M2.4 3.7 L5 6.3 L7.6 3.7" fill="none" stroke="#444444" stroke-width="1.3"/></svg>
<div class="b" style="left:974px;top:70px;width:549px;height:63px;background:#fff;border:1px solid #e1e1e1;"></div>
<div class="b" style="left:976px;top:73px;width:106px;height:28px;background:#fff;border:3px solid #a3d8bb;"></div>
<span class="t" style="left:983.50px;top:76.50px;font-size:13px;color:#111;transform:scaleX(1.0741);">Normal</span>
<div class="b" style="left:1085px;top:76px;width:100px;height:22px;background:#ffc7ce;"></div>
<span class="t" style="left:1089.50px;top:76.50px;font-size:13px;color:#9c0006;transform:scaleX(0.9511);">Bad</span>
<div class="b" style="left:1191px;top:76px;width:100px;height:22px;background:#c6efce;"></div>
<span class="t" style="left:1195.50px;top:76.50px;font-size:13px;color:#006100;transform:scaleX(1.0219);">Good</span>
<div class="b" style="left:1297px;top:76px;width:100px;height:22px;background:#ffeb9c;"></div>
<span class="t" style="left:1301.50px;top:76.50px;font-size:13px;color:#9c5700;transform:scaleX(1.1096);">Neutral</span>
<div class="b" style="left:1403px;top:76px;width:100px;height:22px;background:#f2f2f2;border:1px solid #7f7f7f;"></div>
<span class="t" style="left:1407.50px;top:76.50px;font-size:13px;color:#fa7d00;transform:scaleX(0.9705);font-weight:700;">Calculation</span>
<div class="b" style="left:979px;top:104px;width:100px;height:22px;background:#a5a5a5;border:3px double #3f3f3f;"></div>
<span class="t" style="left:983.50px;top:104.50px;font-size:13px;color:#fff;transform:scaleX(0.9553);font-weight:700;">Check Cell</span>
<span class="t" style="left:1089.50px;top:104.50px;font-size:13px;color:#7f7f7f;transform:scaleX(1.0590);font-style:italic;">Explanatory ...</span>
<div class="b" style="left:1191px;top:104px;width:100px;height:22px;background:#ffcc99;border:1px solid #7f7f7f;"></div>
<span class="t" style="left:1195.50px;top:104.50px;font-size:13px;color:#3f3f76;transform:scaleX(1.1240);">Input</span>
<span class="t" style="left:1301.50px;top:104.50px;font-size:13px;color:#fa7d00;transform:scaleX(1.0417);">Linked Cell</span>
<div class="b" style="left:1297px;top:122px;width:100px;height:3px;border:none;border-top:1px solid #ff8001;border-bottom:1px solid #ff8001;"></div>
<div class="b" style="left:1403px;top:104px;width:100px;height:22px;background:#ffffcc;border:1px solid #b2b2b2;"></div>
<span class="t" style="left:1407.50px;top:104.50px;font-size:13px;color:#111;transform:scaleX(1.0925);">Note</span>
<div class="b" style="left:1508px;top:70px;width:15px;height:21px;background:#fff;border:1px solid #d0d0d0;"></div>
<svg class="b" style="left:1510px;top:76px;" width="11" height="9" viewBox="0 0 11 9"><path d="M2.5 6 L5.5 3 L8.5 6" fill="none" stroke="#444" stroke-width="1.1"/></svg>
<div class="b" style="left:1508px;top:90px;width:15px;height:21px;background:#fff;border:1px solid #d0d0d0;"></div>
<svg class="b" style="left:1510px;top:96px;" width="11" height="9" viewBox="0 0 11 9"><path d="M2.5 3 L5.5 6 L8.5 3" fill="none" stroke="#444" stroke-width="1.1"/></svg>
<div class="b" style="left:1508px;top:110px;width:15px;height:23px;background:#fff;border:1px solid #d0d0d0;"></div>
<svg class="b" style="left:1510px;top:115px;" width="11" height="12" viewBox="0 0 11 12"><path d="M2 2.5 H9" stroke="#444" stroke-width="1.1"/><path d="M2.5 5.5 L5.5 8.5 L8.5 5.5" fill="none" stroke="#444" stroke-width="1.1"/></svg>
<span class="t" style="left:1168.00px;top:141.50px;font-size:12px;color:#444444;transform:scaleX(0.8721);">Styles</span>
<div class="b" style="left:1532px;top:68px;width:1px;height:88px;background:#d8d8d8;"></div>
<svg class="b" style="left:1546px;top:75px;" width="33" height="23" viewBox="0 0 33 23"><g transform="translate(2 0)"><rect x="0.5" y="0.5" width="27" height="21" fill="#f6f6f6"/><path d="M0.5 0.5 H27.5 V21.5 H0.5 Z M9.5 0.5 V21.5 M18.5 0.5 V21.5 M0.5 7.5 H27.5 M0.5 14.5 H27.5" stroke="#b4b4b4" fill="none"/><rect x="6" y="7" width="24" height="8" fill="#d4d4d4"/><path d="M9.5 7 V15 M18.5 7 V15" stroke="#c4c4c4"/><path d="M12 9 H4.5 V6.5 L-1 11 L4.5 15.5 V13 H12 Z" fill="#fafafa" stroke="#c6c6c6" stroke-width=".9"/></g></svg>
<svg class="b" style="left:1590px;top:75px;" width="31" height="23" viewBox="0 0 31 23"><rect x="0.5" y="0.5" width="27" height="21" fill="#fff"/><path d="M0.5 0.5 H27.5 V21.5 H0.5 Z M9.5 0.5 V21.5 M18.5 0.5 V21.5 M0.5 7.5 H27.5 M0.5 14.5 H27.5" stroke="#262626" fill="none"/><rect x="0" y="8" width="4.5" height="6" fill="#fff"/><path d="M0.5 7.5 H4.5 V14.5 H0.5" stroke="#262626" fill="none"/><path d="M4.5 7.5 H16.5 L19.5 11 L16.5 14.5 H4.5 Z" fill="#62a6ea"/><path d="M9.5 7.5 V14.5" stroke="#4a8fd6"/><rect x="19.5" y="8" width="9" height="6" fill="#fff"/><path d="M18 5.5 L29 16.5 M29 5.5 L18 16.5" stroke="#e0525a" stroke-width="1.1"/></svg>
<svg class="b" style="left:1632px;top:70px;" width="29" height="27" viewBox="0 -1 29 27"><path d="M6.5 0.5 H21.5 M6.5 -1 V2.5 M21.5 -1 V2.5" stroke="#3c6e99" fill="none"/><g transform="translate(0 4)"><rect x="0.5" y="0.5" width="27" height="21" fill="#fff"/><rect x="0.5" y="7.5" width="27" height="7" fill="#d7eafb"/><rect x="7.5" y="7.5" width="13" height="7" fill="#5b9bd5"/><path d="M0.5 0.5 H27.5 V21.5 H0.5 Z M7.5 0.5 V21.5 M20.5 0.5 V21.5 M0.5 7.5 H27.5 M0.5 14.5 H27.5" stroke="#262626" fill="none"/></g></svg>
<span class="t" style="left:1547.00px;top:102.50px;font-size:12px;color:#444444;transform:scaleX(0.9496);">Insert</span>
<svg class="b" style="left:1556px;top:124px;" width="10" height="10" viewBox="0 0 10 10"><path d="M2.4 3.7 L5 6.3 L7.6 3.7" fill="none" stroke="#444444" stroke-width="1.3"/></svg>
<span class="t" style="left:1587.50px;top:102.50px;font-size:12px;color:#444444;transform:scaleX(0.9369);">Delete</span>
<svg class="b" style="left:1598.5px;top:124px;" width="10" height="10" viewBox="0 0 10 10"><path d="M2.4 3.7 L5 6.3 L7.6 3.7" fill="none" stroke="#444444" stroke-width="1.3"/></svg>
<span class="t" style="left:1627.50px;top:102.50px;font-size:12px;color:#444444;transform:scaleX(0.9867);">Format</span>
<svg class="b" style="left:1640.5px;top:124px;" width="10" height="10" viewBox="0 0 10 10"><path d="M2.4 3.7 L5 6.3 L7.6 3.7" fill="none" stroke="#444444" stroke-width="1.3"/></svg>
<span class="t" style="left:1592.50px;top:141.50px;font-size:12px;color:#444444;transform:scaleX(0.8623);">Cells</span>
<div class="b" style="left:1675px;top:68px;width:1px;height:88px;background:#d8d8d8;"></div>
<svg class="b" style="left:1688px;top:70px;" width="14" height="16" viewBox="0 0 14 16"><path d="M12.5 3.5 V1.5 H1.5 L7.5 8 L1.5 14.5 H12.5 V12.5" fill="none" stroke="#444" stroke-width="1.3"/></svg>
<span class="t" style="left:1706.00px;top:68.50px;font-size:12px;color:#444444;transform:scaleX(1.0028);">AutoSum</span>
<svg class="b" style="left:1764px;top:74.5px;" width="10" height="10" viewBox="0 0 10 10"><path d="M2.4 3.7 L5 6.3 L7.6 3.7" fill="none" stroke="#444444" stroke-width="1.3"/></svg>
<svg class="b" style="left:1687px;top:93px;" width="16" height="16" viewBox="0 0 16 16"><rect x="1" y="1" width="14" height="14" fill="#fff" stroke="#444" stroke-width="1.1"/><path d="M1 3.5 H15" stroke="#444" stroke-width="1.1"/><path d="M8 5.5 V12 M5.5 9.5 L8 12 L10.5 9.5" fill="none" stroke="#2b7cd3" stroke-width="1.2"/></svg>
<span class="t" style="left:1706.00px;top:91.50px;font-size:12px;color:#444444;transform:scaleX(0.9785);">Fill</span>
<svg class="b" style="left:1722.5px;top:97.5px;" width="10" height="10" viewBox="0 0 10 10"><path d="M2.4 3.7 L5 6.3 L7.6 3.7" fill="none" stroke="#444444" stroke-width="1.3"/></svg>
<svg class="b" style="left:1687px;top:116px;" width="17" height="16" viewBox="0 0 17 16"><path d="M1.5 9 L9 1.5 L15 7.5 L7.5 15 L4.5 15 Z" fill="#fff" stroke="#b04fb8" stroke-width="1.2"/><path d="M1.5 9 L5 5.5 L11 11.5 L7.5 15 L4.5 15 Z" fill="#d59bd9" stroke="#b04fb8" stroke-width="1.2"/></svg>
<span class="t" style="left:1706.00px;top:114.50px;font-size:12px;color:#444444;transform:scaleX(0.9590);">Clear</span>
<svg class="b" style="left:1735px;top:120.5px;" width="10" height="10" viewBox="0 0 10 10"><path d="M2.4 3.7 L5 6.3 L7.6 3.7" fill="none" stroke="#444444" stroke-width="1.3"/></svg>
<span class="t" style="left:1786.15px;top:69.00px;font-size:15.5px;color:#2e86cc;transform:scaleX(0.9000);">A</span>
<span class="t" style="left:1786.45px;top:82.80px;font-size:15px;color:#333;transform:scaleX(0.9500);">Z</span>
<svg class="b" style="left:1798px;top:78px;" width="18" height="18" viewBox="0 0 18 18"><path d="M0.8 1.5 H15.2 C15 5 9.5 6 9.5 9.5 V15.8 H6.5 V9.5 C6.5 6 1 5 0.8 1.5 Z" fill="none" stroke="#3b3b3b" stroke-width="1.2"/></svg>
<span class="t" style="left:1783.00px;top:102.50px;font-size:12px;color:#444444;transform:scaleX(1.0196);">Sort &amp;</span>
<span class="t" style="left:1781.00px;top:118.50px;font-size:12px;color:#444444;transform:scaleX(1.0312);">Filter</span>
<svg class="b" style="left:1808.5px;top:124px;" width="10" height="10" viewBox="0 0 10 10"><path d="M2.4 3.7 L5 6.3 L7.6 3.7" fill="none" stroke="#444444" stroke-width="1.3"/></svg>
<svg class="b" style="left:1828px;top:70px;" width="34" height="34" viewBox="0 0 34 34"><circle cx="19.6" cy="12.5" r="10" fill="none" stroke="#3b3b3b" stroke-width="1.2"/><path d="M12.3 19.8 L1.8 30.5" stroke="#3b3b3b" stroke-width="1.3"/></svg>
<span class="t" style="left:1826.50px;top:102.50px;font-size:12px;color:#444444;transform:scaleX(1.0091);">Find &amp;</span>
<span class="t" style="left:1823.50px;top:118.50px;font-size:12px;color:#444444;transform:scaleX(0.9145);">Select</span>
<svg class="b" style="left:1855px;top:124px;" width="10" height="10" viewBox="0 0 10 10"><path d="M2.4 3.7 L5 6.3 L7.6 3.7" fill="none" stroke="#444444" stroke-width="1.3"/></svg>
<span class="t" style="left:1757.00px;top:141.50px;font-size:12px;color:#444444;transform:scaleX(0.9947);">Editing</span>
<div class="b" style="left:1875px;top:68px;width:1px;height:88px;background:#d8d8d8;"></div>
<svg class="b" style="left:1900px;top:148px;" width="12" height="10" viewBox="0 0 12 10"><path d="M1.5 7.5 L6 3 L10.5 7.5" fill="none" stroke="#444" stroke-width="1.3"/></svg>
<div class="b" style="left:0px;top:982px;width:1920px;height:29px;background:#f3f3f3;"></div>
<div class="b" style="left:0px;top:982px;width:1899px;height:1px;background:#b4b4b4;"></div>
<div class="b" style="left:1899px;top:982px;width:21px;height:1px;background:#fff;"></div>
<svg class="b" style="left:24px;top:989px;" width="10" height="12" viewBox="0 0 10 12"><path d="M7.3 2.5 L2.8 6 L7.3 9.5 Z" fill="#2e5c44"/></svg>
<svg class="b" style="left:53px;top:989px;" width="10" height="12" viewBox="0 0 10 12"><path d="M2.7 2.5 L7.2 6 L2.7 9.5 Z" fill="#2e5c44"/></svg>
<span class="t" style="left:80.58px;top:984.00px;font-size:13px;color:#444;font-weight:700;">...</span>
<div class="b" style="left:100px;top:982px;width:101px;height:25px;background:linear-gradient(#ffffff 20%,#dfe4ec 55%,#a9b5c6 100%);border-left:1px solid #b4b4b4;border-right:1px solid #b4b4b4;"></div>
<div class="b" style="left:101px;top:982px;width:99px;height:1px;background:#fff;"></div>
<div class="b" style="left:100px;top:1005px;width:101px;height:2px;background:#1e6b41;"></div>
<span class="t" style="left:112.00px;top:985.50px;font-size:12.5px;color:#1e5c3a;font-weight:700;">GL RK (YTD)</span>
<div class="b" style="left:204px;top:985px;width:103.5px;height:21px;background:#e26b0a;"></div>
<span class="t" style="left:214.50px;top:985.50px;font-size:12.5px;color:#fff;transform:scaleX(0.9329);">GL ACCURATE</span>
<div class="b" style="left:313px;top:985px;width:104.5px;height:21px;background:#e26b0a;"></div>
<span class="t" style="left:324.00px;top:985.50px;font-size:12.5px;color:#fff;transform:scaleX(0.9297);">TB ACCURATE</span>
<div class="b" style="left:423px;top:985px;width:104.5px;height:21px;background:#e26b0a;"></div>
<span class="t" style="left:434.00px;top:985.50px;font-size:12.5px;color:#fff;transform:scaleX(0.9222);">BS ACCURATE</span>
<div class="b" style="left:532px;top:985px;width:104px;height:21px;background:#e26b0a;"></div>
<span class="t" style="left:543.00px;top:985.50px;font-size:12.5px;color:#fff;transform:scaleX(0.9305);">PL ACCURATE</span>
<div class="b" style="left:641.5px;top:985px;width:33.5px;height:21px;background:#0070c0;"></div>
<span class="t" style="left:649.50px;top:985.50px;font-size:12.5px;color:#fff;transform:scaleX(0.8695);">BS</span>
<div class="b" style="left:680px;top:985px;width:34px;height:21px;background:#0070c0;"></div>
<span class="t" style="left:689.50px;top:985.50px;font-size:12.5px;color:#fff;transform:scaleX(0.8829);">PL</span>
<div class="b" style="left:309.5px;top:987px;width:1px;height:18px;background:#c6c6c6;"></div>
<div class="b" style="left:419.5px;top:987px;width:1px;height:18px;background:#c6c6c6;"></div>
<div class="b" style="left:529.5px;top:987px;width:1px;height:18px;background:#c6c6c6;"></div>
<div class="b" style="left:638px;top:987px;width:1px;height:18px;background:#c6c6c6;"></div>
<div class="b" style="left:677.5px;top:987px;width:1px;height:18px;background:#c6c6c6;"></div>
<div class="b" style="left:716.5px;top:987px;width:1px;height:18px;background:#c6c6c6;"></div>
<div class="b" style="left:813px;top:987px;width:1px;height:18px;background:#c6c6c6;"></div>
<div class="b" style="left:902.5px;top:987px;width:1px;height:18px;background:#c6c6c6;"></div>
<div class="b" style="left:1011.5px;top:987px;width:1px;height:18px;background:#c6c6c6;"></div>
<span class="t" style="left:731.00px;top:985.50px;font-size:12.5px;color:#444;transform:scaleX(0.9284);">LIST BUPOT</span>
<span class="t" style="left:825.50px;top:985.50px;font-size:12.5px;color:#444;transform:scaleX(1.0549);">INV vs UM</span>
<span class="t" style="left:916.00px;top:985.50px;font-size:12.5px;color:#444;transform:scaleX(0.9884);">UM vs BUPOT</span>
<span class="t" style="left:1026.00px;top:985.50px;font-size:12.5px;color:#444;transform:scaleX(0.9521);">REKAPAN</span>
<span class="t" style="left:1091.08px;top:984.00px;font-size:13px;color:#444;font-weight:700;">...</span>
<svg class="b" style="left:1115px;top:987px;" width="18" height="18" viewBox="0 0 18 18"><circle cx="9" cy="9" r="7.2" fill="none" stroke="#666" stroke-width="1.1"/><path d="M9 5 V13 M5 9 H13" stroke="#666" stroke-width="1.2"/></svg>
<div class="b" style="left:1138px;top:983px;width:29px;height:28px;background:#fff;"></div>
<div class="b" style="left:1152px;top:991px;width:2px;height:2px;background:#b0b0b0;"></div>
<div class="b" style="left:1152px;top:995px;width:2px;height:2px;background:#b0b0b0;"></div>
<div class="b" style="left:1152px;top:999px;width:2px;height:2px;background:#b0b0b0;"></div>
<div class="b" style="left:1169px;top:989px;width:15px;height:14px;background:#fff;border:1px solid #ababab;"></div>
<svg class="b" style="left:1169px;top:989px;" width="15" height="14" viewBox="0 0 15 14"><path d="M9.5 3 L4.5 7 L9.5 11 Z" fill="#222"/></svg>
<div class="b" style="left:1184px;top:989px;width:99px;height:14px;background:#fff;border:1px solid #ababab;"></div>
<div class="b" style="left:1881px;top:989px;width:15px;height:14px;background:#fff;border:1px solid #ababab;"></div>
<svg class="b" style="left:1881px;top:989px;" width="15" height="14" viewBox="0 0 15 14"><path d="M5.5 3 L10.5 7 L5.5 11 Z" fill="#222"/></svg>
<div class="b" style="left:0px;top:1011px;width:1920px;height:21px;background:#217346;"></div>
<span class="t" style="left:7.00px;top:1012.00px;font-size:11.5px;color:#fff;transform:scaleX(0.9476);">Ready</span>
<span class="t" style="left:55.00px;top:1011.50px;font-size:11.5px;color:#fff;transform:scaleX(1.0125);">27 of 695 records found</span>
<svg class="b" style="left:196px;top:1014px;" width="15" height="15" viewBox="0 0 15 15"><circle cx="7" cy="2.5" r="1.6" fill="none" stroke="#fff" stroke-width="1"/><path d="M1.5 5.5 L7 7 L12.5 5.5 M7 7 V10 M7 10 L3.5 14 M7 10 L10.5 14" fill="none" stroke="#fff" stroke-width="1.1"/><path d="M9.5 10.5 L13.5 14.5 M13.5 10.5 L9.5 14.5" stroke="#fff" stroke-width="1"/></svg>
<span class="t" style="left:214.00px;top:1012.00px;font-size:11.5px;color:#fff;transform:scaleX(0.9828);">Accessibility: Investigate</span>
<div class="b" style="left:1620px;top:1011px;width:40px;height:21px;background:#0f5a2d;"></div>
<div class="b" style="left:1633px;top:1015px;width:13px;height:13px;border:1px solid #fff;"></div>
<div class="b" style="left:1637px;top:1015px;width:1px;height:13px;background:#fff;"></div>
<div class="b" style="left:1641px;top:1015px;width:1px;height:13px;background:#fff;"></div>
<div class="b" style="left:1633px;top:1019px;width:13px;height:1px;background:#fff;"></div>
<div class="b" style="left:1633px;top:1023px;width:13px;height:1px;background:#fff;"></div>
<div class="b" style="left:1673px;top:1015px;width:14px;height:13px;border:1px solid #fff;"></div>
<div class="b" style="left:1676px;top:1018px;width:8px;height:7px;border:1px solid #fff;"></div>
<div class="b" style="left:1678px;top:1020px;width:4px;height:1px;background:#fff;"></div>
<div class="b" style="left:1678px;top:1022px;width:4px;height:1px;background:#fff;"></div>
<div class="b" style="left:1713px;top:1015px;width:14px;height:13px;border:1px solid #fff;"></div>
<div class="b" style="left:1717px;top:1015px;width:1px;height:7px;background:#fff;"></div>
<div class="b" style="left:1721px;top:1015px;width:1px;height:7px;background:#fff;"></div>
<div class="b" style="left:1717px;top:1021px;width:10px;height:1px;background:#fff;"></div>
<div class="b" style="left:1745px;top:1021px;width:8px;height:1px;background:#fff;"></div>
<div class="b" style="left:1759px;top:1021px;width:99px;height:1px;background:#cfe3d8;"></div>
<div class="b" style="left:1808px;top:1018px;width:1px;height:7px;background:#cfe3d8;"></div>
<div class="b" style="left:1799px;top:1015px;width:4px;height:13px;background:#fff;"></div>
<div class="b" style="left:1863px;top:1021px;width:9px;height:1px;background:#fff;"></div>
<div class="b" style="left:1867px;top:1017px;width:1px;height:9px;background:#fff;"></div>
<span class="t" style="left:1885.00px;top:1012.00px;font-size:11.5px;color:#fff;transform:scaleX(0.9124);">85%</span>
<div class="b" style="left:0px;top:1032px;width:1920px;height:48px;background:#dcdcdc;"></div>
<svg class="b" style="left:17px;top:1040px;" width="32" height="28" viewBox="0 0 32 28"><defs><linearGradient id="wc" x1="0" y1="0" x2="0" y2="1"><stop offset="0" stop-color="#f4f7fc"/><stop offset="1" stop-color="#b9cdee"/></linearGradient><radialGradient id="ws" cx=".4" cy=".4" r=".7"><stop offset="0" stop-color="#fbb03b"/><stop offset="1" stop-color="#f07c1a"/></radialGradient></defs><circle cx="19.5" cy="10.5" r="5.6" fill="url(#ws)"/><path d="M7 26 C0.5 26 0.5 17.5 6.5 17 C7 11.5 15.5 10 18 15 C23 13.5 27 17 25.5 21.5 C25 24.5 23 26 20.5 26 Z" fill="url(#wc)" stroke="#aebfdc" stroke-width=".5"/></svg>
<span class="t" style="left:50.00px;top:1038.00px;font-size:12px;color:#1f1f1f;transform:scaleX(0.9324);">28°C</span>
<span class="t" style="left:50.00px;top:1054.00px;font-size:12px;color:#555;transform:scaleX(0.9607);">Berawan</span>
<div class="b" style="left:639px;top:1045px;width:11px;height:11px;background:#45b8f5;border-radius:1px;"></div>
<div class="b" style="left:651.5px;top:1045px;width:11px;height:11px;background:#2ea4ee;border-radius:1px;"></div>
<div class="b" style="left:639px;top:1057.5px;width:11px;height:11px;background:#1f95e8;border-radius:1px;"></div>
<div class="b" style="left:651.5px;top:1057.5px;width:11px;height:11px;background:#0f7fd9;border-radius:1px;"></div>
<div class="b" style="left:676px;top:1040px;width:217px;height:32px;background:#f1f1f1;border:1px solid #cfcfcf;border-radius:16px;"></div>
<svg class="b" style="left:685px;top:1047px;" width="18" height="18" viewBox="0 0 18 18"><circle cx="8" cy="8" r="5.6" fill="none" stroke="#222" stroke-width="1.5"/><path d="M12 12 L16 16" stroke="#222" stroke-width="1.7"/></svg>
<span class="t" style="left:712.00px;top:1046.00px;font-size:13px;color:#5a5a5a;transform:scaleX(0.9832);">Search</span>
<svg class="b" style="left:845px;top:1042px;" width="46" height="28" viewBox="0 0 46 28"><ellipse cx="24" cy="24.5" rx="19" ry="2.5" fill="#e4d6b8"/><path d="M6 5 C9 2 13 3 15 6 L28 8 C33 8 36 11 36 15 L35 24 H33 L32 17 L22 17 L21 24 H19 L18 16 C14 15 12 12 11 10 L6 11 C4 10 4 7 6 5 Z" fill="#4a4a55"/><path d="M14 6 L16 15 M18 7 L19 16 M22 8 L23 16 M26 8 L27 16 M30 9 L31 16" stroke="#f2f2f2" stroke-width="1.3"/></svg>
<div class="b" style="left:913px;top:1045px;width:18px;height:16px;background:#f6f6f6;border:1px solid #d6d6d6;border-radius:2px;"></div>
<div class="b" style="left:907px;top:1051px;width:18px;height:15px;background:#222;border-radius:2px;"></div>
<div class="b" style="left:912px;top:1051px;width:13px;height:10px;background:#bfbfbf;"></div>
<svg class="b" style="left:950px;top:1044px;" width="26" height="26" viewBox="0 0 26 26"><defs><linearGradient id="cp" x1="0" y1="0" x2="1" y2="1"><stop offset="0" stop-color="#2a7bde"/><stop offset=".45" stop-color="#a45bd6"/><stop offset=".75" stop-color="#f0643c"/><stop offset="1" stop-color="#f6c02c"/></linearGradient></defs><path d="M9 2 H16 C19 2 20 4 21 7 L24 17 C25 21 22 24 18 24 H10 C7 24 6 22 5 19 L2 9 C1 5 4 2 9 2 Z" fill="url(#cp)"/><path d="M10 8 H15 L17 18 H12 Z" fill="#dcdcdc"/></svg>
<svg class="b" style="left:993px;top:1043px;" width="27" height="27" viewBox="0 0 27 27"><defs><linearGradient id="eg" x1="0" y1="0" x2="1" y2="1"><stop offset="0" stop-color="#35c1f1"/><stop offset=".6" stop-color="#1b7fd1"/><stop offset="1" stop-color="#3cc35b"/></linearGradient></defs><circle cx="13.5" cy="13.5" r="12" fill="url(#eg)"/><path d="M6 17 C4 9 12 5 18 9 C21 11 21 15 17 15 H12 C12 19 16 21 20 20 C15 25 7 23 6 17 Z" fill="#dff3fb" opacity=".9"/></svg>
<svg class="b" style="left:1038px;top:1044px;" width="26" height="26" viewBox="0 0 26 26"><path d="M8 6 V3.5 C8 2 9 1.5 10 1.5 H16 C17 1.5 18 2 18 3.5 V6" fill="none" stroke="#1d5fb4" stroke-width="1.6"/><rect x="1.5" y="6" width="23" height="18" rx="3" fill="#1b5fae"/><rect x="8" y="10" width="4.5" height="4.5" fill="#f25022"/><rect x="13.5" y="10" width="4.5" height="4.5" fill="#7fba00"/><rect x="8" y="15.5" width="4.5" height="4.5" fill="#00a4ef"/><rect x="13.5" y="15.5" width="4.5" height="4.5" fill="#ffb900"/></svg>
<svg class="b" style="left:1082px;top:1044px;" width="26" height="26" viewBox="0 0 26 26"><path d="M13 1.5 A11.5 11.5 0 1 1 6.5 22.5 L1.5 24.5 L3.5 19.5 A11.5 11.5 0 0 1 13 1.5 Z" fill="#27b43e"/><path d="M13 4 A9 9 0 1 1 7.5 20.2 L5 21 L5.8 18.6 A9 9 0 0 1 13 4 Z" fill="none" stroke="#fff" stroke-width="1.3"/><path d="M9.5 8.5 C8.5 9.5 8.5 11.5 11 14.5 C13.5 17.5 15.5 18 17 17 L17.5 15.5 L15.5 14.5 L14.5 15.5 C13.5 15 12 13.5 11.3 12.2 L12.3 11.2 L11.2 8.8 Z" fill="#fff"/></svg>
<svg class="b" style="left:1125px;top:1044px;" width="26" height="26" viewBox="0 0 26 26"><circle cx="13" cy="13" r="12" fill="#fff"/><path d="M13 1 A12 12 0 0 1 23.4 7 H13 A6 6 0 0 0 7.8 10 L2.6 7 A12 12 0 0 1 13 1 Z" fill="#e33b2e"/><path d="M23.4 7 A12 12 0 0 1 13 25 L18.2 16 A6 6 0 0 0 18.2 10 Z" fill="#fbc116" transform="rotate(0)"/><path d="M2.6 7 L7.8 16 A6 6 0 0 0 13 19 L13 25 A12 12 0 0 1 2.6 7 Z" fill="#2aa44a"/><path d="M13 19 A6 6 0 0 0 18.2 16 L13 25 Z" fill="#fbc116"/><circle cx="13" cy="13" r="5.5" fill="#fff"/><circle cx="13" cy="13" r="4.3" fill="#3b82e8"/></svg>
<svg class="b" style="left:1169px;top:1045px;" width="28" height="24" viewBox="0 0 28 24"><path d="M1.5 4 C1.5 2.5 2.5 2 3.5 2 H10 L12.5 4.5 H24 C25.5 4.5 26 5.5 26 6.5 V20 H1.5 Z" fill="#f0b429"/><path d="M1.5 8 H26 V20 C26 21.5 25 22 24 22 H3.5 C2.5 22 1.5 21.5 1.5 20 Z" fill="#fcd462"/><rect x="8" y="15" width="12" height="5" rx="1" fill="#2b7cd3"/></svg>
<div class="b" style="left:1180px;top:1073px;width:7px;height:3px;background:#8d8d8d;border-radius:2px;"></div>
<svg class="b" style="left:1213px;top:1046px;" width="26" height="26" viewBox="0 0 26 26"><circle cx="13" cy="13" r="12" fill="#fff"/><path d="M13 1 A12 12 0 0 1 23.4 7 H13 A6 6 0 0 0 7.8 10 L2.6 7 A12 12 0 0 1 13 1 Z" fill="#e33b2e"/><path d="M23.4 7 A12 12 0 0 1 13 25 L18.2 16 A6 6 0 0 0 18.2 10 Z" fill="#fbc116" transform="rotate(0)"/><path d="M2.6 7 L7.8 16 A6 6 0 0 0 13 19 L13 25 A12 12 0 0 1 2.6 7 Z" fill="#2aa44a"/><path d="M13 19 A6 6 0 0 0 18.2 16 L13 25 Z" fill="#fbc116"/><circle cx="13" cy="13" r="5.5" fill="#fff"/><circle cx="13" cy="13" r="4.3" fill="#3b82e8"/></svg>
<div class="b" style="left:1227px;top:1038px;width:17px;height:17px;border-radius:9px;background:#c8321e;"></div>
<span class="t" style="left:1232.07px;top:1036.50px;font-size:9.5px;color:#fff;">D</span>
<div class="b" style="left:1224px;top:1073px;width:7px;height:3px;background:#8d8d8d;border-radius:2px;"></div>
<div class="b" style="left:1251px;top:1037px;width:38px;height:41px;background:#ebebeb;border:1px solid #d2d2d2;border-radius:5px;"></div>
<svg class="b" style="left:1257px;top:1044px;" width="28" height="26" viewBox="0 0 28 26"><rect x="7" y="1.5" width="19" height="22" rx="2" fill="#21a366"/><rect x="16.5" y="1.5" width="9.5" height="5.5" fill="#33c481"/><rect x="16.5" y="7" width="9.5" height="5.5" fill="#21a366"/><rect x="16.5" y="12.5" width="9.5" height="5.5" fill="#107c41"/><rect x="7" y="12.5" width="9.5" height="11" fill="#185c37"/><rect x="7" y="7" width="9.5" height="5.5" fill="#107c41"/><rect x="1" y="6" width="14" height="14" rx="1.5" fill="#107c41"/><path d="M5 9.5 L11 16.5 M11 9.5 L5 16.5" stroke="#fff" stroke-width="1.8"/></svg>
<div class="b" style="left:1262px;top:1073px;width:16px;height:3px;background:#1a73d9;border-radius:2px;"></div>
<svg class="b" style="left:1683px;top:1051px;" width="13" height="9" viewBox="0 0 13 9"><path d="M1.5 7.5 L6.5 2.5 L11.5 7.5" fill="none" stroke="#222" stroke-width="1.4"/></svg>
<span class="t" style="left:1716.00px;top:1046.50px;font-size:12px;color:#1f1f1f;transform:scaleX(0.9229);">ENG</span>
<svg class="b" style="left:1756px;top:1046px;" width="20" height="20" viewBox="0 0 20 20"><rect x="1.5" y="2.5" width="12" height="10" rx="1" fill="none" stroke="#222" stroke-width="1.2"/><path d="M7.5 12.5 V16 M4 16.5 H11" stroke="#222" stroke-width="1.2"/><rect x="12" y="1" width="5" height="8" rx="1" fill="#dcdcdc" stroke="#222" stroke-width="1.1"/></svg>
<svg class="b" style="left:1781px;top:1048px;" width="18" height="16" viewBox="0 0 18 16"><path d="M1.5 5.5 H4.5 L8.5 2 V14 L4.5 10.5 H1.5 Z" fill="none" stroke="#222" stroke-width="1.2"/><path d="M11 5 C12.2 6.5 12.2 9.5 11 11" fill="none" stroke="#222" stroke-width="1.1"/><path d="M13.5 3 C15.8 6 15.8 10 13.5 13" fill="none" stroke="#aaa" stroke-width="1.1"/></svg>
<span class="t" style="left:1847.87px;top:1038.30px;font-size:12px;color:#1f1f1f;transform:scaleX(0.9700);">10:40</span>
<span class="t" style="left:1815.74px;top:1054.30px;font-size:12px;color:#1f1f1f;transform:scaleX(1.0200);">31/01/2026</span>
<svg class="b" style="left:1884px;top:1047px;" width="18" height="18" viewBox="0 0 18 18"><path d="M3 13 C5 11 4 5 9 4.5 C14 5 13 11 15 13 Z" fill="#222"/><circle cx="9" cy="15" r="1.8" fill="#222"/><text x="6.5" y="11.5" font-size="6.5" font-family="Liberation Sans" fill="#dcdcdc">z</text></svg>
</body></html>
